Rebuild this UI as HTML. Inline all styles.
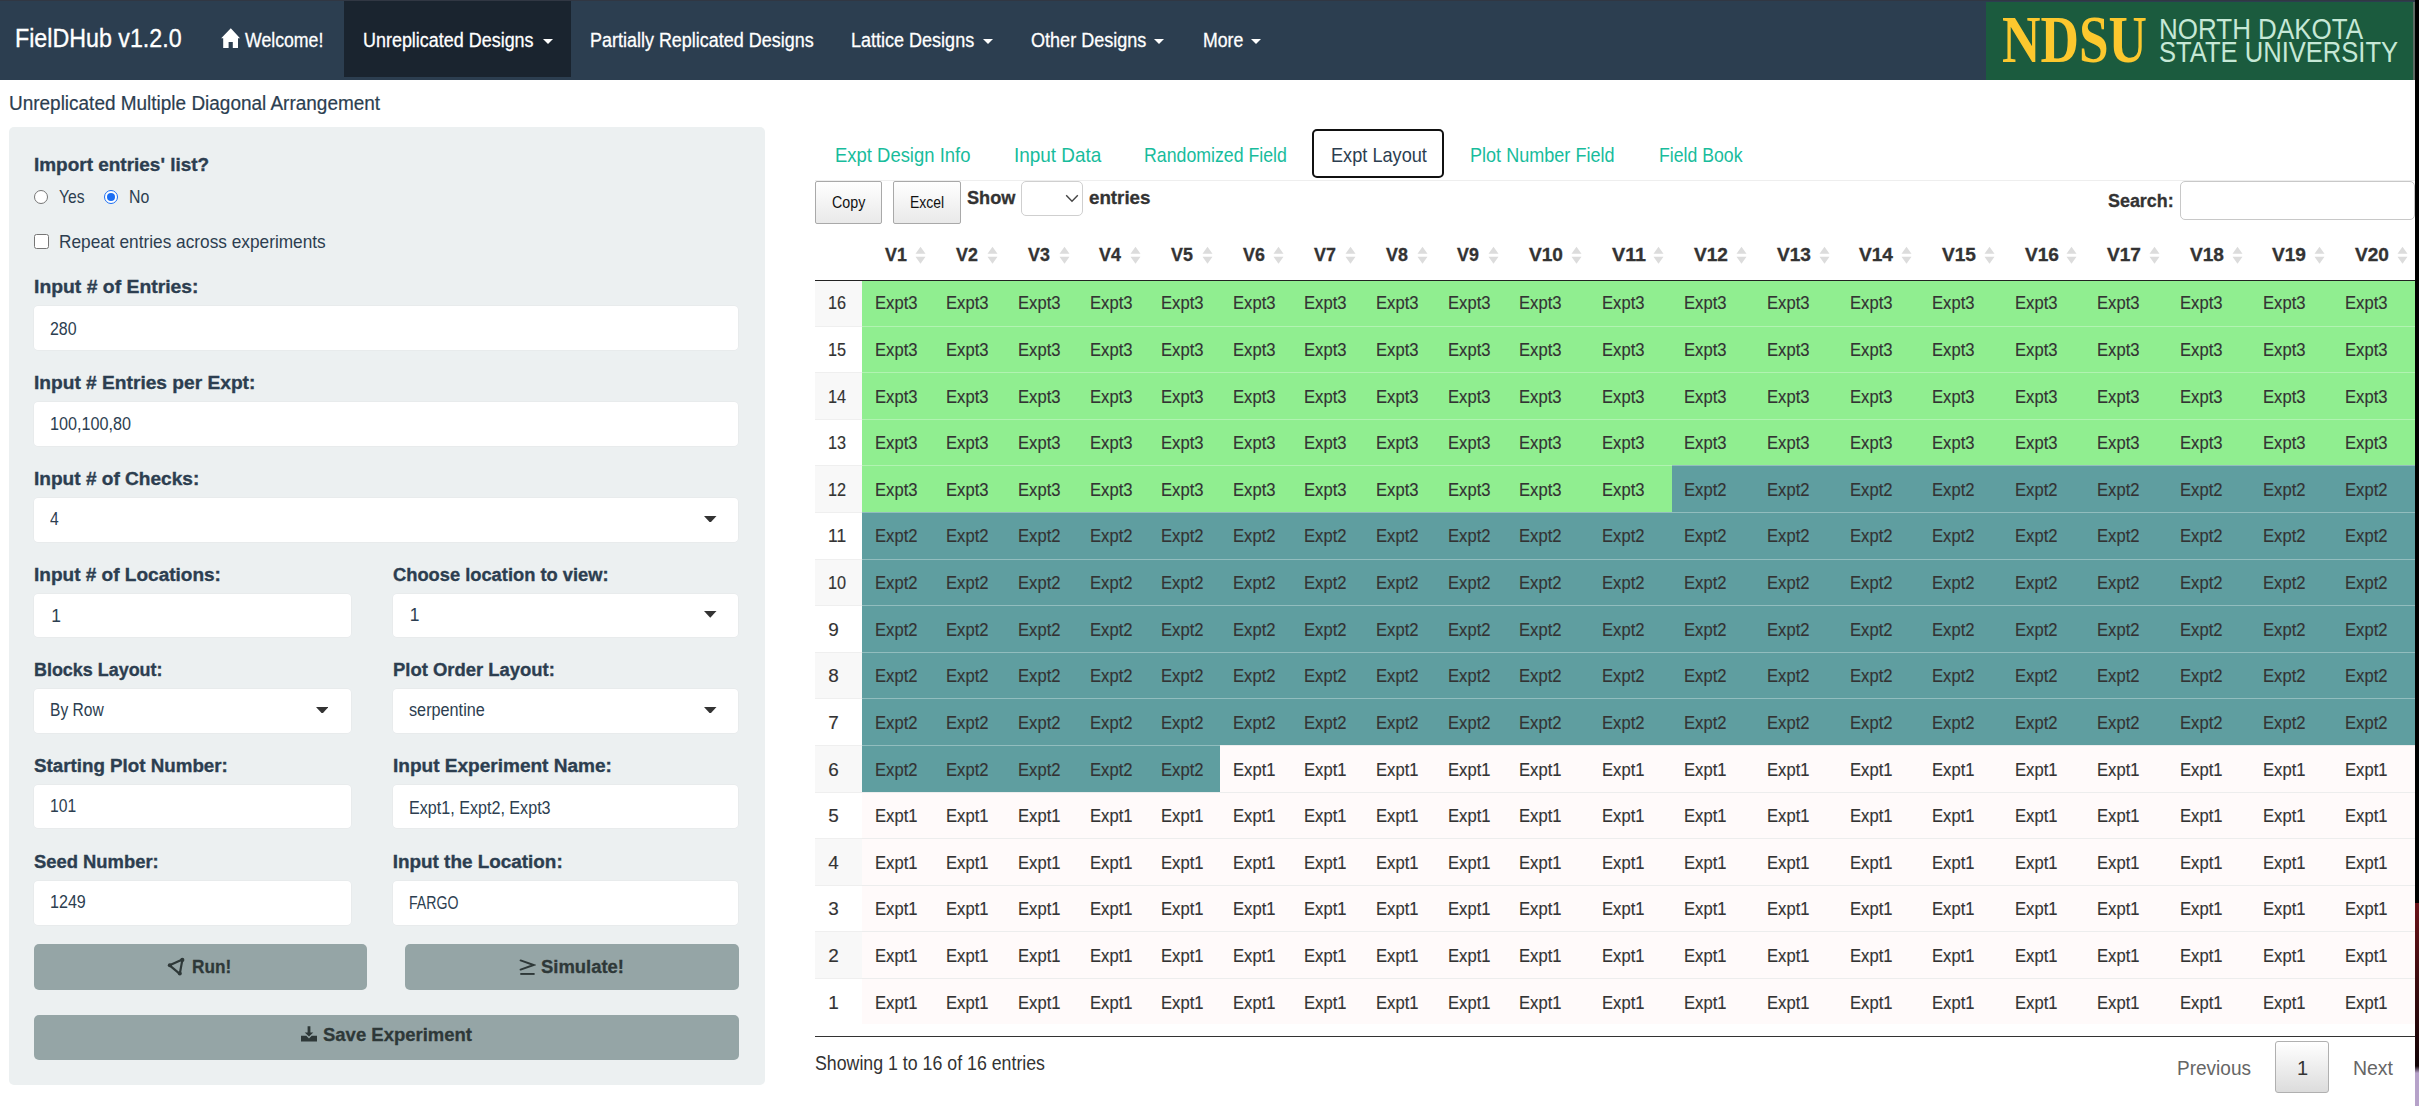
<!DOCTYPE html>
<html><head><meta charset="utf-8"><title>FielDHub</title>
<style>
html,body{margin:0;padding:0;}
body{width:2419px;height:1106px;overflow:hidden;position:relative;background:#fff;font-family:"Liberation Sans",sans-serif;}
.t{position:absolute;white-space:pre;transform-origin:0 0;}
.r{position:absolute;}
</style></head><body>
<div class="r" style="left:0.00px;top:0.00px;width:2415.00px;height:80.00px;background:#2c3e50;"></div>
<div class="r" style="left:0.00px;top:0.00px;width:2415.00px;height:1.00px;background:#313743;"></div>
<div class="r" style="left:344.00px;top:1.00px;width:227.00px;height:76.00px;background:#1a242f;"></div>
<div class="r" style="left:1986.00px;top:2.00px;width:427.00px;height:77.50px;background:#1b5b3e;"></div>
<div class="r" style="left:2413.00px;top:2.00px;width:2.00px;height:77.50px;background:#5d6b64;"></div>
<div class="t" style="left:15.20px;top:25.41px;font-size:26.45px;line-height:26.45px;font-weight:normal;color:#ffffff;font-family:'Liberation Sans', sans-serif;transform:scaleX(0.8789);-webkit-text-stroke:0.35px #ffffff;">FielDHub v1.2.0</div>
<div class="t" style="left:245.00px;top:29.57px;font-size:20.35px;line-height:20.35px;font-weight:normal;color:#ffffff;font-family:'Liberation Sans', sans-serif;transform:scaleX(0.8702);-webkit-text-stroke:0.3px #ffffff;">Welcome!</div>
<div class="t" style="left:363.00px;top:29.61px;font-size:20.79px;line-height:20.79px;font-weight:normal;color:#ffffff;font-family:'Liberation Sans', sans-serif;transform:scaleX(0.8635);-webkit-text-stroke:0.3px #ffffff;">Unreplicated Designs</div>
<div class="t" style="left:590.00px;top:29.61px;font-size:20.79px;line-height:20.79px;font-weight:normal;color:#ffffff;font-family:'Liberation Sans', sans-serif;transform:scaleX(0.8645);-webkit-text-stroke:0.3px #ffffff;">Partially Replicated Designs</div>
<div class="t" style="left:851.30px;top:29.61px;font-size:20.79px;line-height:20.79px;font-weight:normal;color:#ffffff;font-family:'Liberation Sans', sans-serif;transform:scaleX(0.8669);-webkit-text-stroke:0.3px #ffffff;">Lattice Designs</div>
<div class="t" style="left:1030.60px;top:29.61px;font-size:20.79px;line-height:20.79px;font-weight:normal;color:#ffffff;font-family:'Liberation Sans', sans-serif;transform:scaleX(0.8685);-webkit-text-stroke:0.3px #ffffff;">Other Designs</div>
<div class="t" style="left:1202.70px;top:29.61px;font-size:20.79px;line-height:20.79px;font-weight:normal;color:#ffffff;font-family:'Liberation Sans', sans-serif;transform:scaleX(0.8513);-webkit-text-stroke:0.3px #ffffff;">More</div>
<svg class="r" style="left:543.00px;top:38.80px" width="10" height="5" viewBox="0 0 10 5"><path d="M0 0H10L5.0 5Z" fill="#fff"/></svg>
<svg class="r" style="left:983.30px;top:38.80px" width="10" height="5" viewBox="0 0 10 5"><path d="M0 0H10L5.0 5Z" fill="#fff"/></svg>
<svg class="r" style="left:1154.30px;top:38.80px" width="10" height="5" viewBox="0 0 10 5"><path d="M0 0H10L5.0 5Z" fill="#fff"/></svg>
<svg class="r" style="left:1251.00px;top:38.80px" width="10" height="5" viewBox="0 0 10 5"><path d="M0 0H10L5.0 5Z" fill="#fff"/></svg>
<svg class="r" style="left:221px;top:28px" width="20" height="21" viewBox="0 0 20 21"><path d="M9.8 0.3 L19 10.3 H17 V20 H11.8 V14 H7.6 V20 H2.2 V10.3 H0.2 Z" fill="#fff"/></svg>
<div class="t" style="left:2002.00px;top:5.73px;font-size:67.66px;line-height:67.66px;font-weight:bold;color:#fcc82e;font-family:'Liberation Serif', serif;transform:scaleX(0.7872);">NDSU</div>
<div class="t" style="left:2159.30px;top:14.66px;font-size:28.63px;line-height:28.63px;font-weight:normal;color:#c6e8d6;font-family:'Liberation Sans', sans-serif;transform:scaleX(0.9077);">NORTH DAKOTA</div>
<div class="t" style="left:2158.80px;top:37.30px;font-size:29.65px;line-height:29.65px;font-weight:normal;color:#c6e8d6;font-family:'Liberation Sans', sans-serif;transform:scaleX(0.8626);">STATE UNIVERSITY</div>
<div class="t" style="left:9.10px;top:94.34px;font-size:19.33px;line-height:19.33px;font-weight:normal;color:#2c3e50;font-family:'Liberation Sans', sans-serif;transform:scaleX(0.9813);-webkit-text-stroke:0.2px #2c3e50;">Unreplicated Multiple Diagonal Arrangement</div>
<div class="r" style="left:8.50px;top:127.00px;width:756.00px;height:957.50px;background:#ecf0f1;border-radius:5px;"></div>
<div class="t" style="left:33.60px;top:156.30px;font-size:18.90px;line-height:18.90px;font-weight:bold;color:#2c3e50;font-family:'Liberation Sans', sans-serif;transform:scaleX(1.0035);-webkit-text-stroke:0.35px #2c3e50;">Import entries&#x27; list?</div>
<div class="r" style="left:33.7px;top:189.8px;width:14.6px;height:14.6px;border-radius:50%;box-sizing:border-box;border:1px solid #767676;background:#fff;"></div>
<div class="r" style="left:103.9px;top:189.8px;width:14.6px;height:14.6px;border-radius:50%;box-sizing:border-box;border:1.6px solid #1b6ef3;background:#fff;"></div>
<div class="r" style="left:106.9px;top:192.8px;width:8.6px;height:8.6px;border-radius:50%;background:#1b6ef3;"></div>
<div class="t" style="left:59.00px;top:189.07px;font-size:17.88px;line-height:17.88px;font-weight:normal;color:#2c3e50;font-family:'Liberation Sans', sans-serif;transform:scaleX(0.8771);">Yes</div>
<div class="t" style="left:129.00px;top:189.07px;font-size:17.88px;line-height:17.88px;font-weight:normal;color:#2c3e50;font-family:'Liberation Sans', sans-serif;transform:scaleX(0.8888);">No</div>
<div class="r" style="left:33.6px;top:234px;width:15px;height:14.6px;border-radius:2.5px;box-sizing:border-box;border:1px solid #767676;background:#fff;"></div>
<div class="t" style="left:59.00px;top:232.80px;font-size:18.31px;line-height:18.31px;font-weight:normal;color:#2c3e50;font-family:'Liberation Sans', sans-serif;transform:scaleX(0.9435);">Repeat entries across experiments</div>
<div class="t" style="left:33.60px;top:278.20px;font-size:18.90px;line-height:18.90px;font-weight:bold;color:#2c3e50;font-family:'Liberation Sans', sans-serif;transform:scaleX(1.0248);-webkit-text-stroke:0.35px #2c3e50;">Input # of Entries:</div>
<div class="t" style="left:33.60px;top:373.90px;font-size:18.90px;line-height:18.90px;font-weight:bold;color:#2c3e50;font-family:'Liberation Sans', sans-serif;transform:scaleX(1.0138);-webkit-text-stroke:0.35px #2c3e50;">Input # Entries per Expt:</div>
<div class="t" style="left:33.60px;top:469.80px;font-size:18.90px;line-height:18.90px;font-weight:bold;color:#2c3e50;font-family:'Liberation Sans', sans-serif;transform:scaleX(1.0093);-webkit-text-stroke:0.35px #2c3e50;">Input # of Checks:</div>
<div class="t" style="left:33.60px;top:565.70px;font-size:18.90px;line-height:18.90px;font-weight:bold;color:#2c3e50;font-family:'Liberation Sans', sans-serif;transform:scaleX(1.0065);-webkit-text-stroke:0.35px #2c3e50;">Input # of Locations:</div>
<div class="t" style="left:393.00px;top:565.70px;font-size:18.90px;line-height:18.90px;font-weight:bold;color:#2c3e50;font-family:'Liberation Sans', sans-serif;transform:scaleX(0.9686);-webkit-text-stroke:0.35px #2c3e50;">Choose location to view:</div>
<div class="t" style="left:33.70px;top:660.80px;font-size:18.90px;line-height:18.90px;font-weight:bold;color:#2c3e50;font-family:'Liberation Sans', sans-serif;transform:scaleX(0.9488);-webkit-text-stroke:0.35px #2c3e50;">Blocks Layout:</div>
<div class="t" style="left:392.70px;top:660.80px;font-size:18.90px;line-height:18.90px;font-weight:bold;color:#2c3e50;font-family:'Liberation Sans', sans-serif;transform:scaleX(0.9761);-webkit-text-stroke:0.35px #2c3e50;">Plot Order Layout:</div>
<div class="t" style="left:33.70px;top:757.10px;font-size:18.90px;line-height:18.90px;font-weight:bold;color:#2c3e50;font-family:'Liberation Sans', sans-serif;transform:scaleX(0.9929);-webkit-text-stroke:0.35px #2c3e50;">Starting Plot Number:</div>
<div class="t" style="left:392.80px;top:757.20px;font-size:18.90px;line-height:18.90px;font-weight:bold;color:#2c3e50;font-family:'Liberation Sans', sans-serif;transform:scaleX(1.0076);-webkit-text-stroke:0.35px #2c3e50;">Input Experiment Name:</div>
<div class="t" style="left:33.70px;top:853.10px;font-size:18.90px;line-height:18.90px;font-weight:bold;color:#2c3e50;font-family:'Liberation Sans', sans-serif;transform:scaleX(0.9734);-webkit-text-stroke:0.35px #2c3e50;">Seed Number:</div>
<div class="t" style="left:392.70px;top:853.30px;font-size:18.90px;line-height:18.90px;font-weight:bold;color:#2c3e50;font-family:'Liberation Sans', sans-serif;-webkit-text-stroke:0.35px #2c3e50;">Input the Location:</div>
<div class="r" style="left:34.30px;top:305.50px;width:703.90px;height:44.50px;background:#fff;border-radius:4px;box-shadow:0 0 0 0.5px #e3e6e8;"></div>
<div class="r" style="left:34.30px;top:402.00px;width:703.90px;height:44.00px;background:#fff;border-radius:4px;box-shadow:0 0 0 0.5px #e3e6e8;"></div>
<div class="r" style="left:34.30px;top:497.70px;width:703.90px;height:44.30px;background:#fff;border-radius:4px;box-shadow:0 0 0 0.5px #e3e6e8;"></div>
<div class="r" style="left:34.20px;top:593.80px;width:316.60px;height:43.20px;background:#fff;border-radius:4px;box-shadow:0 0 0 0.5px #e3e6e8;"></div>
<div class="r" style="left:393.40px;top:593.80px;width:344.90px;height:43.20px;background:#fff;border-radius:4px;box-shadow:0 0 0 0.5px #e3e6e8;"></div>
<div class="r" style="left:34.20px;top:688.90px;width:316.60px;height:44.10px;background:#fff;border-radius:4px;box-shadow:0 0 0 0.5px #e3e6e8;"></div>
<div class="r" style="left:393.40px;top:688.90px;width:344.90px;height:44.10px;background:#fff;border-radius:4px;box-shadow:0 0 0 0.5px #e3e6e8;"></div>
<div class="r" style="left:34.20px;top:784.80px;width:316.60px;height:43.70px;background:#fff;border-radius:4px;box-shadow:0 0 0 0.5px #e3e6e8;"></div>
<div class="r" style="left:393.40px;top:784.80px;width:344.90px;height:43.70px;background:#fff;border-radius:4px;box-shadow:0 0 0 0.5px #e3e6e8;"></div>
<div class="r" style="left:34.20px;top:881.00px;width:316.60px;height:43.50px;background:#fff;border-radius:4px;box-shadow:0 0 0 0.5px #e3e6e8;"></div>
<div class="r" style="left:393.40px;top:881.00px;width:344.90px;height:43.50px;background:#fff;border-radius:4px;box-shadow:0 0 0 0.5px #e3e6e8;"></div>
<div class="t" style="left:50.00px;top:320.94px;font-size:17.44px;line-height:17.44px;font-weight:normal;color:#2c3e50;font-family:'Liberation Sans', sans-serif;transform:scaleX(0.9146);">280</div>
<div class="t" style="left:50.00px;top:416.04px;font-size:17.44px;line-height:17.44px;font-weight:normal;color:#2c3e50;font-family:'Liberation Sans', sans-serif;transform:scaleX(0.9279);">100,100,80</div>
<div class="t" style="left:50.00px;top:510.84px;font-size:17.44px;line-height:17.44px;font-weight:normal;color:#2c3e50;font-family:'Liberation Sans', sans-serif;transform:scaleX(0.8987);">4</div>
<div class="t" style="left:51.20px;top:607.84px;font-size:17.44px;line-height:17.44px;font-weight:normal;color:#2c3e50;font-family:'Liberation Sans', sans-serif;">1</div>
<div class="t" style="left:409.80px;top:607.44px;font-size:17.44px;line-height:17.44px;font-weight:normal;color:#2c3e50;font-family:'Liberation Sans', sans-serif;">1</div>
<div class="t" style="left:50.00px;top:701.94px;font-size:17.44px;line-height:17.44px;font-weight:normal;color:#2c3e50;font-family:'Liberation Sans', sans-serif;transform:scaleX(0.8947);">By Row</div>
<div class="t" style="left:408.80px;top:701.94px;font-size:17.44px;line-height:17.44px;font-weight:normal;color:#2c3e50;font-family:'Liberation Sans', sans-serif;transform:scaleX(0.9306);">serpentine</div>
<div class="t" style="left:49.70px;top:798.24px;font-size:17.44px;line-height:17.44px;font-weight:normal;color:#2c3e50;font-family:'Liberation Sans', sans-serif;transform:scaleX(0.9008);">101</div>
<div class="t" style="left:409.00px;top:800.14px;font-size:17.44px;line-height:17.44px;font-weight:normal;color:#2c3e50;font-family:'Liberation Sans', sans-serif;transform:scaleX(0.9244);">Expt1, Expt2, Expt3</div>
<div class="t" style="left:49.70px;top:894.34px;font-size:17.44px;line-height:17.44px;font-weight:normal;color:#2c3e50;font-family:'Liberation Sans', sans-serif;transform:scaleX(0.9225);">1249</div>
<div class="t" style="left:409.00px;top:895.14px;font-size:17.44px;line-height:17.44px;font-weight:normal;color:#2c3e50;font-family:'Liberation Sans', sans-serif;transform:scaleX(0.8108);">FARGO</div>
<svg class="r" style="left:704.05px;top:515.50px" width="12.5" height="6.8" viewBox="0 0 12.5 6.8"><path d="M0 0H12.5L6.25 6.8Z" fill="#333"/></svg>
<svg class="r" style="left:704.05px;top:611.30px" width="12.5" height="6.8" viewBox="0 0 12.5 6.8"><path d="M0 0H12.5L6.25 6.8Z" fill="#333"/></svg>
<svg class="r" style="left:315.75px;top:706.70px" width="12.5" height="6.8" viewBox="0 0 12.5 6.8"><path d="M0 0H12.5L6.25 6.8Z" fill="#333"/></svg>
<svg class="r" style="left:704.25px;top:706.70px" width="12.5" height="6.8" viewBox="0 0 12.5 6.8"><path d="M0 0H12.5L6.25 6.8Z" fill="#333"/></svg>
<div class="r" style="left:33.70px;top:944.30px;width:333.80px;height:45.50px;background:#95a5a6;border-radius:5px;"></div>
<div class="r" style="left:405.20px;top:944.40px;width:333.60px;height:45.20px;background:#95a5a6;border-radius:5px;"></div>
<div class="r" style="left:33.70px;top:1015.00px;width:705.30px;height:44.60px;background:#95a5a6;border-radius:5px;"></div>
<svg class="r" style="left:167px;top:957px" width="20" height="20" viewBox="0 0 20 20"><path d="M2.6 8.3 L15.4 2.6 L12.8 16.8 Z" fill="none" stroke="#2e3838" stroke-width="2.2" stroke-linejoin="round"/><circle cx="2.8" cy="8.3" r="2" fill="#2e3838"/><circle cx="15.3" cy="2.9" r="2.1" fill="#2e3838"/><circle cx="12.8" cy="16.6" r="2" fill="#2e3838"/></svg>
<div class="t" style="left:192.20px;top:958.30px;font-size:18.90px;line-height:18.90px;font-weight:bold;color:#2e3838;font-family:'Liberation Sans', sans-serif;transform:scaleX(0.9109);-webkit-text-stroke:0.3px #2e3838;">Run!</div>
<svg class="r" style="left:518px;top:958px" width="18" height="18" viewBox="0 0 18 18"><path d="M2.6 2.4 L15.6 7 L2.6 11.6" fill="none" stroke="#2e3838" stroke-width="1.9" stroke-linecap="round" stroke-linejoin="miter"/><rect x="2.3" y="15" width="14.3" height="1.9" fill="#2e3838"/></svg>
<div class="t" style="left:540.90px;top:958.40px;font-size:18.90px;line-height:18.90px;font-weight:bold;color:#2e3838;font-family:'Liberation Sans', sans-serif;transform:scaleX(0.9761);-webkit-text-stroke:0.3px #2e3838;">Simulate!</div>
<svg class="r" style="left:300px;top:1025px" width="18" height="18" viewBox="0 0 18 18"><path d="M7.6 1.3 H10.4 V7.5 H13.3 L9 11.6 L4.7 7.5 H7.6 Z" fill="#2e3838"/><path d="M1 10.8 H6.3 L9 13.4 L11.7 10.8 H17 V16.6 H1 Z" fill="#2e3838"/></svg>
<div class="t" style="left:323.00px;top:1026.15px;font-size:18.60px;line-height:18.60px;font-weight:bold;color:#2e3838;font-family:'Liberation Sans', sans-serif;transform:scaleX(0.9943);-webkit-text-stroke:0.3px #2e3838;">Save Experiment</div>
<div class="r" style="left:815.00px;top:180.00px;width:1600.00px;height:1.00px;background:#eeeeee;"></div>
<div class="r" style="left:1312.40px;top:128.70px;width:132.10px;height:49.30px;box-sizing:border-box;border:2.2px solid #111;border-radius:5px;background:#fff;"></div>
<div class="t" style="left:835.00px;top:144.62px;font-size:20.06px;line-height:20.06px;font-weight:normal;color:#18bc9c;font-family:'Liberation Sans', sans-serif;transform:scaleX(0.9206);">Expt Design Info</div>
<div class="t" style="left:1013.60px;top:144.62px;font-size:20.06px;line-height:20.06px;font-weight:normal;color:#18bc9c;font-family:'Liberation Sans', sans-serif;transform:scaleX(0.9442);">Input Data</div>
<div class="t" style="left:1144.00px;top:144.62px;font-size:20.06px;line-height:20.06px;font-weight:normal;color:#18bc9c;font-family:'Liberation Sans', sans-serif;transform:scaleX(0.8845);">Randomized Field</div>
<div class="t" style="left:1330.70px;top:144.62px;font-size:20.06px;line-height:20.06px;font-weight:normal;color:#2c3e50;font-family:'Liberation Sans', sans-serif;transform:scaleX(0.9060);">Expt Layout</div>
<div class="t" style="left:1469.80px;top:144.62px;font-size:20.06px;line-height:20.06px;font-weight:normal;color:#18bc9c;font-family:'Liberation Sans', sans-serif;transform:scaleX(0.9008);">Plot Number Field</div>
<div class="t" style="left:1658.50px;top:144.62px;font-size:20.06px;line-height:20.06px;font-weight:normal;color:#18bc9c;font-family:'Liberation Sans', sans-serif;transform:scaleX(0.8816);">Field Book</div>
<div class="r" style="left:815.00px;top:180.50px;width:67.30px;height:43.00px;box-sizing:border-box;border:1px solid #a9a9a9;border-radius:2px;background:linear-gradient(to bottom,#ffffff 0%,#e9e9e9 100%);"></div>
<div class="r" style="left:893.20px;top:180.50px;width:68.30px;height:43.00px;box-sizing:border-box;border:1px solid #a9a9a9;border-radius:2px;background:linear-gradient(to bottom,#ffffff 0%,#e9e9e9 100%);"></div>
<div class="t" style="left:831.70px;top:194.40px;font-size:16.42px;line-height:16.42px;font-weight:normal;color:#111;font-family:'Liberation Sans', sans-serif;transform:scaleX(0.8683);">Copy</div>
<div class="t" style="left:910.10px;top:194.40px;font-size:16.42px;line-height:16.42px;font-weight:normal;color:#111;font-family:'Liberation Sans', sans-serif;transform:scaleX(0.8516);">Excel</div>
<div class="t" style="left:967.00px;top:190.27px;font-size:17.88px;line-height:17.88px;font-weight:bold;color:#333;font-family:'Liberation Sans', sans-serif;transform:scaleX(1.0170);-webkit-text-stroke:0.3px #333;">Show</div>
<div class="r" style="left:1021.30px;top:180.50px;width:62.20px;height:35.00px;box-sizing:border-box;border:1px solid #cfcfcf;border-radius:5px;background:#fff;"></div>
<svg class="r" style="left:1065px;top:194px" width="14" height="9" viewBox="0 0 14 9"><path d="M1.2 1.3 L7 7.3 L12.8 1.3" fill="none" stroke="#444" stroke-width="1.4"/></svg>
<div class="t" style="left:1088.50px;top:190.27px;font-size:17.88px;line-height:17.88px;font-weight:bold;color:#333;font-family:'Liberation Sans', sans-serif;transform:scaleX(1.0488);-webkit-text-stroke:0.3px #333;">entries</div>
<div class="t" style="left:2108.40px;top:192.03px;font-size:18.75px;line-height:18.75px;font-weight:bold;color:#333;font-family:'Liberation Sans', sans-serif;transform:scaleX(0.9539);-webkit-text-stroke:0.3px #333;">Search:</div>
<div class="r" style="left:2179.60px;top:180.50px;width:235.00px;height:39.90px;box-sizing:border-box;border:1px solid #c8c8c8;border-radius:5px;background:#fff;"></div>
<div class="t" style="left:884.50px;top:245.80px;font-size:18.31px;line-height:18.31px;font-weight:bold;color:#333;font-family:'Liberation Sans', sans-serif;transform:scaleX(0.9737);-webkit-text-stroke:0.3px #333;">V1</div>
<svg class="r" style="left:915.30px;top:245.5px" width="11" height="18.5" viewBox="0 0 11 18"><path d="M5.5 0.5 L10.5 7.6 H0.5 Z M5.5 17.5 L10.5 10.4 H0.5 Z" fill="#dcdcdc"/></svg>
<div class="t" style="left:956.10px;top:245.80px;font-size:18.31px;line-height:18.31px;font-weight:bold;color:#333;font-family:'Liberation Sans', sans-serif;transform:scaleX(0.9737);-webkit-text-stroke:0.3px #333;">V2</div>
<svg class="r" style="left:986.90px;top:245.5px" width="11" height="18.5" viewBox="0 0 11 18"><path d="M5.5 0.5 L10.5 7.6 H0.5 Z M5.5 17.5 L10.5 10.4 H0.5 Z" fill="#dcdcdc"/></svg>
<div class="t" style="left:1027.70px;top:245.80px;font-size:18.31px;line-height:18.31px;font-weight:bold;color:#333;font-family:'Liberation Sans', sans-serif;transform:scaleX(0.9737);-webkit-text-stroke:0.3px #333;">V3</div>
<svg class="r" style="left:1058.50px;top:245.5px" width="11" height="18.5" viewBox="0 0 11 18"><path d="M5.5 0.5 L10.5 7.6 H0.5 Z M5.5 17.5 L10.5 10.4 H0.5 Z" fill="#dcdcdc"/></svg>
<div class="t" style="left:1099.30px;top:245.80px;font-size:18.31px;line-height:18.31px;font-weight:bold;color:#333;font-family:'Liberation Sans', sans-serif;transform:scaleX(0.9737);-webkit-text-stroke:0.3px #333;">V4</div>
<svg class="r" style="left:1130.10px;top:245.5px" width="11" height="18.5" viewBox="0 0 11 18"><path d="M5.5 0.5 L10.5 7.6 H0.5 Z M5.5 17.5 L10.5 10.4 H0.5 Z" fill="#dcdcdc"/></svg>
<div class="t" style="left:1170.90px;top:245.80px;font-size:18.31px;line-height:18.31px;font-weight:bold;color:#333;font-family:'Liberation Sans', sans-serif;transform:scaleX(0.9737);-webkit-text-stroke:0.3px #333;">V5</div>
<svg class="r" style="left:1201.70px;top:245.5px" width="11" height="18.5" viewBox="0 0 11 18"><path d="M5.5 0.5 L10.5 7.6 H0.5 Z M5.5 17.5 L10.5 10.4 H0.5 Z" fill="#dcdcdc"/></svg>
<div class="t" style="left:1242.50px;top:245.80px;font-size:18.31px;line-height:18.31px;font-weight:bold;color:#333;font-family:'Liberation Sans', sans-serif;transform:scaleX(0.9737);-webkit-text-stroke:0.3px #333;">V6</div>
<svg class="r" style="left:1273.30px;top:245.5px" width="11" height="18.5" viewBox="0 0 11 18"><path d="M5.5 0.5 L10.5 7.6 H0.5 Z M5.5 17.5 L10.5 10.4 H0.5 Z" fill="#dcdcdc"/></svg>
<div class="t" style="left:1314.10px;top:245.80px;font-size:18.31px;line-height:18.31px;font-weight:bold;color:#333;font-family:'Liberation Sans', sans-serif;transform:scaleX(0.9737);-webkit-text-stroke:0.3px #333;">V7</div>
<svg class="r" style="left:1344.90px;top:245.5px" width="11" height="18.5" viewBox="0 0 11 18"><path d="M5.5 0.5 L10.5 7.6 H0.5 Z M5.5 17.5 L10.5 10.4 H0.5 Z" fill="#dcdcdc"/></svg>
<div class="t" style="left:1385.70px;top:245.80px;font-size:18.31px;line-height:18.31px;font-weight:bold;color:#333;font-family:'Liberation Sans', sans-serif;transform:scaleX(0.9737);-webkit-text-stroke:0.3px #333;">V8</div>
<svg class="r" style="left:1416.50px;top:245.5px" width="11" height="18.5" viewBox="0 0 11 18"><path d="M5.5 0.5 L10.5 7.6 H0.5 Z M5.5 17.5 L10.5 10.4 H0.5 Z" fill="#dcdcdc"/></svg>
<div class="t" style="left:1457.30px;top:245.80px;font-size:18.31px;line-height:18.31px;font-weight:bold;color:#333;font-family:'Liberation Sans', sans-serif;transform:scaleX(0.9737);-webkit-text-stroke:0.3px #333;">V9</div>
<svg class="r" style="left:1488.10px;top:245.5px" width="11" height="18.5" viewBox="0 0 11 18"><path d="M5.5 0.5 L10.5 7.6 H0.5 Z M5.5 17.5 L10.5 10.4 H0.5 Z" fill="#dcdcdc"/></svg>
<div class="t" style="left:1528.90px;top:245.80px;font-size:18.31px;line-height:18.31px;font-weight:bold;color:#333;font-family:'Liberation Sans', sans-serif;transform:scaleX(1.0430);-webkit-text-stroke:0.3px #333;">V10</div>
<svg class="r" style="left:1570.70px;top:245.5px" width="11" height="18.5" viewBox="0 0 11 18"><path d="M5.5 0.5 L10.5 7.6 H0.5 Z M5.5 17.5 L10.5 10.4 H0.5 Z" fill="#dcdcdc"/></svg>
<div class="t" style="left:1611.50px;top:245.80px;font-size:18.31px;line-height:18.31px;font-weight:bold;color:#333;font-family:'Liberation Sans', sans-serif;transform:scaleX(1.0762);-webkit-text-stroke:0.3px #333;">V11</div>
<svg class="r" style="left:1653.30px;top:245.5px" width="11" height="18.5" viewBox="0 0 11 18"><path d="M5.5 0.5 L10.5 7.6 H0.5 Z M5.5 17.5 L10.5 10.4 H0.5 Z" fill="#dcdcdc"/></svg>
<div class="t" style="left:1694.10px;top:245.80px;font-size:18.31px;line-height:18.31px;font-weight:bold;color:#333;font-family:'Liberation Sans', sans-serif;transform:scaleX(1.0430);-webkit-text-stroke:0.3px #333;">V12</div>
<svg class="r" style="left:1735.90px;top:245.5px" width="11" height="18.5" viewBox="0 0 11 18"><path d="M5.5 0.5 L10.5 7.6 H0.5 Z M5.5 17.5 L10.5 10.4 H0.5 Z" fill="#dcdcdc"/></svg>
<div class="t" style="left:1776.70px;top:245.80px;font-size:18.31px;line-height:18.31px;font-weight:bold;color:#333;font-family:'Liberation Sans', sans-serif;transform:scaleX(1.0430);-webkit-text-stroke:0.3px #333;">V13</div>
<svg class="r" style="left:1818.50px;top:245.5px" width="11" height="18.5" viewBox="0 0 11 18"><path d="M5.5 0.5 L10.5 7.6 H0.5 Z M5.5 17.5 L10.5 10.4 H0.5 Z" fill="#dcdcdc"/></svg>
<div class="t" style="left:1859.30px;top:245.80px;font-size:18.31px;line-height:18.31px;font-weight:bold;color:#333;font-family:'Liberation Sans', sans-serif;transform:scaleX(1.0430);-webkit-text-stroke:0.3px #333;">V14</div>
<svg class="r" style="left:1901.10px;top:245.5px" width="11" height="18.5" viewBox="0 0 11 18"><path d="M5.5 0.5 L10.5 7.6 H0.5 Z M5.5 17.5 L10.5 10.4 H0.5 Z" fill="#dcdcdc"/></svg>
<div class="t" style="left:1941.90px;top:245.80px;font-size:18.31px;line-height:18.31px;font-weight:bold;color:#333;font-family:'Liberation Sans', sans-serif;transform:scaleX(1.0430);-webkit-text-stroke:0.3px #333;">V15</div>
<svg class="r" style="left:1983.70px;top:245.5px" width="11" height="18.5" viewBox="0 0 11 18"><path d="M5.5 0.5 L10.5 7.6 H0.5 Z M5.5 17.5 L10.5 10.4 H0.5 Z" fill="#dcdcdc"/></svg>
<div class="t" style="left:2024.50px;top:245.80px;font-size:18.31px;line-height:18.31px;font-weight:bold;color:#333;font-family:'Liberation Sans', sans-serif;transform:scaleX(1.0430);-webkit-text-stroke:0.3px #333;">V16</div>
<svg class="r" style="left:2066.30px;top:245.5px" width="11" height="18.5" viewBox="0 0 11 18"><path d="M5.5 0.5 L10.5 7.6 H0.5 Z M5.5 17.5 L10.5 10.4 H0.5 Z" fill="#dcdcdc"/></svg>
<div class="t" style="left:2107.10px;top:245.80px;font-size:18.31px;line-height:18.31px;font-weight:bold;color:#333;font-family:'Liberation Sans', sans-serif;transform:scaleX(1.0430);-webkit-text-stroke:0.3px #333;">V17</div>
<svg class="r" style="left:2148.90px;top:245.5px" width="11" height="18.5" viewBox="0 0 11 18"><path d="M5.5 0.5 L10.5 7.6 H0.5 Z M5.5 17.5 L10.5 10.4 H0.5 Z" fill="#dcdcdc"/></svg>
<div class="t" style="left:2189.70px;top:245.80px;font-size:18.31px;line-height:18.31px;font-weight:bold;color:#333;font-family:'Liberation Sans', sans-serif;transform:scaleX(1.0430);-webkit-text-stroke:0.3px #333;">V18</div>
<svg class="r" style="left:2231.50px;top:245.5px" width="11" height="18.5" viewBox="0 0 11 18"><path d="M5.5 0.5 L10.5 7.6 H0.5 Z M5.5 17.5 L10.5 10.4 H0.5 Z" fill="#dcdcdc"/></svg>
<div class="t" style="left:2272.30px;top:245.80px;font-size:18.31px;line-height:18.31px;font-weight:bold;color:#333;font-family:'Liberation Sans', sans-serif;transform:scaleX(1.0430);-webkit-text-stroke:0.3px #333;">V19</div>
<svg class="r" style="left:2314.10px;top:245.5px" width="11" height="18.5" viewBox="0 0 11 18"><path d="M5.5 0.5 L10.5 7.6 H0.5 Z M5.5 17.5 L10.5 10.4 H0.5 Z" fill="#dcdcdc"/></svg>
<div class="t" style="left:2354.90px;top:245.80px;font-size:18.31px;line-height:18.31px;font-weight:bold;color:#333;font-family:'Liberation Sans', sans-serif;transform:scaleX(1.0430);-webkit-text-stroke:0.3px #333;">V20</div>
<svg class="r" style="left:2396.70px;top:245.5px" width="11" height="18.5" viewBox="0 0 11 18"><path d="M5.5 0.5 L10.5 7.6 H0.5 Z M5.5 17.5 L10.5 10.4 H0.5 Z" fill="#dcdcdc"/></svg>
<div class="r" style="left:815.00px;top:280.00px;width:47.00px;height:46.00px;background:#f8f8f8;"></div>
<div class="r" style="left:862.00px;top:280.00px;width:1553.00px;height:46.00px;background:#90ee90;"></div>
<div class="t" style="left:828.20px;top:294.30px;font-size:18.90px;line-height:18.90px;font-weight:normal;color:#333;font-family:'Liberation Sans', sans-serif;transform:scaleX(0.8610);-webkit-text-stroke:0.15px #333;">16</div>
<div class="t" style="left:874.70px;top:294.30px;font-size:18.90px;line-height:18.90px;font-weight:normal;color:#333;font-family:'Liberation Sans', sans-serif;transform:scaleX(0.8794);-webkit-text-stroke:0.15px #333;">Expt3</div>
<div class="t" style="left:946.30px;top:294.30px;font-size:18.90px;line-height:18.90px;font-weight:normal;color:#333;font-family:'Liberation Sans', sans-serif;transform:scaleX(0.8794);-webkit-text-stroke:0.15px #333;">Expt3</div>
<div class="t" style="left:1017.90px;top:294.30px;font-size:18.90px;line-height:18.90px;font-weight:normal;color:#333;font-family:'Liberation Sans', sans-serif;transform:scaleX(0.8794);-webkit-text-stroke:0.15px #333;">Expt3</div>
<div class="t" style="left:1089.50px;top:294.30px;font-size:18.90px;line-height:18.90px;font-weight:normal;color:#333;font-family:'Liberation Sans', sans-serif;transform:scaleX(0.8794);-webkit-text-stroke:0.15px #333;">Expt3</div>
<div class="t" style="left:1161.10px;top:294.30px;font-size:18.90px;line-height:18.90px;font-weight:normal;color:#333;font-family:'Liberation Sans', sans-serif;transform:scaleX(0.8794);-webkit-text-stroke:0.15px #333;">Expt3</div>
<div class="t" style="left:1232.70px;top:294.30px;font-size:18.90px;line-height:18.90px;font-weight:normal;color:#333;font-family:'Liberation Sans', sans-serif;transform:scaleX(0.8794);-webkit-text-stroke:0.15px #333;">Expt3</div>
<div class="t" style="left:1304.30px;top:294.30px;font-size:18.90px;line-height:18.90px;font-weight:normal;color:#333;font-family:'Liberation Sans', sans-serif;transform:scaleX(0.8794);-webkit-text-stroke:0.15px #333;">Expt3</div>
<div class="t" style="left:1375.90px;top:294.30px;font-size:18.90px;line-height:18.90px;font-weight:normal;color:#333;font-family:'Liberation Sans', sans-serif;transform:scaleX(0.8794);-webkit-text-stroke:0.15px #333;">Expt3</div>
<div class="t" style="left:1447.50px;top:294.30px;font-size:18.90px;line-height:18.90px;font-weight:normal;color:#333;font-family:'Liberation Sans', sans-serif;transform:scaleX(0.8794);-webkit-text-stroke:0.15px #333;">Expt3</div>
<div class="t" style="left:1519.10px;top:294.30px;font-size:18.90px;line-height:18.90px;font-weight:normal;color:#333;font-family:'Liberation Sans', sans-serif;transform:scaleX(0.8794);-webkit-text-stroke:0.15px #333;">Expt3</div>
<div class="t" style="left:1601.70px;top:294.30px;font-size:18.90px;line-height:18.90px;font-weight:normal;color:#333;font-family:'Liberation Sans', sans-serif;transform:scaleX(0.8794);-webkit-text-stroke:0.15px #333;">Expt3</div>
<div class="t" style="left:1684.30px;top:294.30px;font-size:18.90px;line-height:18.90px;font-weight:normal;color:#333;font-family:'Liberation Sans', sans-serif;transform:scaleX(0.8794);-webkit-text-stroke:0.15px #333;">Expt3</div>
<div class="t" style="left:1766.90px;top:294.30px;font-size:18.90px;line-height:18.90px;font-weight:normal;color:#333;font-family:'Liberation Sans', sans-serif;transform:scaleX(0.8794);-webkit-text-stroke:0.15px #333;">Expt3</div>
<div class="t" style="left:1849.50px;top:294.30px;font-size:18.90px;line-height:18.90px;font-weight:normal;color:#333;font-family:'Liberation Sans', sans-serif;transform:scaleX(0.8794);-webkit-text-stroke:0.15px #333;">Expt3</div>
<div class="t" style="left:1932.10px;top:294.30px;font-size:18.90px;line-height:18.90px;font-weight:normal;color:#333;font-family:'Liberation Sans', sans-serif;transform:scaleX(0.8794);-webkit-text-stroke:0.15px #333;">Expt3</div>
<div class="t" style="left:2014.70px;top:294.30px;font-size:18.90px;line-height:18.90px;font-weight:normal;color:#333;font-family:'Liberation Sans', sans-serif;transform:scaleX(0.8794);-webkit-text-stroke:0.15px #333;">Expt3</div>
<div class="t" style="left:2097.30px;top:294.30px;font-size:18.90px;line-height:18.90px;font-weight:normal;color:#333;font-family:'Liberation Sans', sans-serif;transform:scaleX(0.8794);-webkit-text-stroke:0.15px #333;">Expt3</div>
<div class="t" style="left:2179.90px;top:294.30px;font-size:18.90px;line-height:18.90px;font-weight:normal;color:#333;font-family:'Liberation Sans', sans-serif;transform:scaleX(0.8794);-webkit-text-stroke:0.15px #333;">Expt3</div>
<div class="t" style="left:2262.50px;top:294.30px;font-size:18.90px;line-height:18.90px;font-weight:normal;color:#333;font-family:'Liberation Sans', sans-serif;transform:scaleX(0.8794);-webkit-text-stroke:0.15px #333;">Expt3</div>
<div class="t" style="left:2345.10px;top:294.30px;font-size:18.90px;line-height:18.90px;font-weight:normal;color:#333;font-family:'Liberation Sans', sans-serif;transform:scaleX(0.8794);-webkit-text-stroke:0.15px #333;">Expt3</div>
<div class="r" style="left:815.00px;top:326.00px;width:47.00px;height:46.00px;background:#ffffff;"></div>
<div class="r" style="left:862.00px;top:326.00px;width:1553.00px;height:46.00px;background:#90ee90;"></div>
<div class="r" style="left:862.00px;top:326.00px;width:1553.00px;height:1.00px;background:rgba(255,255,255,0.3);"></div>
<div class="r" style="left:815.00px;top:326.00px;width:47.00px;height:1.00px;background:#efefef;"></div>
<div class="t" style="left:828.20px;top:340.93px;font-size:18.90px;line-height:18.90px;font-weight:normal;color:#333;font-family:'Liberation Sans', sans-serif;transform:scaleX(0.8610);-webkit-text-stroke:0.15px #333;">15</div>
<div class="t" style="left:874.70px;top:340.93px;font-size:18.90px;line-height:18.90px;font-weight:normal;color:#333;font-family:'Liberation Sans', sans-serif;transform:scaleX(0.8794);-webkit-text-stroke:0.15px #333;">Expt3</div>
<div class="t" style="left:946.30px;top:340.93px;font-size:18.90px;line-height:18.90px;font-weight:normal;color:#333;font-family:'Liberation Sans', sans-serif;transform:scaleX(0.8794);-webkit-text-stroke:0.15px #333;">Expt3</div>
<div class="t" style="left:1017.90px;top:340.93px;font-size:18.90px;line-height:18.90px;font-weight:normal;color:#333;font-family:'Liberation Sans', sans-serif;transform:scaleX(0.8794);-webkit-text-stroke:0.15px #333;">Expt3</div>
<div class="t" style="left:1089.50px;top:340.93px;font-size:18.90px;line-height:18.90px;font-weight:normal;color:#333;font-family:'Liberation Sans', sans-serif;transform:scaleX(0.8794);-webkit-text-stroke:0.15px #333;">Expt3</div>
<div class="t" style="left:1161.10px;top:340.93px;font-size:18.90px;line-height:18.90px;font-weight:normal;color:#333;font-family:'Liberation Sans', sans-serif;transform:scaleX(0.8794);-webkit-text-stroke:0.15px #333;">Expt3</div>
<div class="t" style="left:1232.70px;top:340.93px;font-size:18.90px;line-height:18.90px;font-weight:normal;color:#333;font-family:'Liberation Sans', sans-serif;transform:scaleX(0.8794);-webkit-text-stroke:0.15px #333;">Expt3</div>
<div class="t" style="left:1304.30px;top:340.93px;font-size:18.90px;line-height:18.90px;font-weight:normal;color:#333;font-family:'Liberation Sans', sans-serif;transform:scaleX(0.8794);-webkit-text-stroke:0.15px #333;">Expt3</div>
<div class="t" style="left:1375.90px;top:340.93px;font-size:18.90px;line-height:18.90px;font-weight:normal;color:#333;font-family:'Liberation Sans', sans-serif;transform:scaleX(0.8794);-webkit-text-stroke:0.15px #333;">Expt3</div>
<div class="t" style="left:1447.50px;top:340.93px;font-size:18.90px;line-height:18.90px;font-weight:normal;color:#333;font-family:'Liberation Sans', sans-serif;transform:scaleX(0.8794);-webkit-text-stroke:0.15px #333;">Expt3</div>
<div class="t" style="left:1519.10px;top:340.93px;font-size:18.90px;line-height:18.90px;font-weight:normal;color:#333;font-family:'Liberation Sans', sans-serif;transform:scaleX(0.8794);-webkit-text-stroke:0.15px #333;">Expt3</div>
<div class="t" style="left:1601.70px;top:340.93px;font-size:18.90px;line-height:18.90px;font-weight:normal;color:#333;font-family:'Liberation Sans', sans-serif;transform:scaleX(0.8794);-webkit-text-stroke:0.15px #333;">Expt3</div>
<div class="t" style="left:1684.30px;top:340.93px;font-size:18.90px;line-height:18.90px;font-weight:normal;color:#333;font-family:'Liberation Sans', sans-serif;transform:scaleX(0.8794);-webkit-text-stroke:0.15px #333;">Expt3</div>
<div class="t" style="left:1766.90px;top:340.93px;font-size:18.90px;line-height:18.90px;font-weight:normal;color:#333;font-family:'Liberation Sans', sans-serif;transform:scaleX(0.8794);-webkit-text-stroke:0.15px #333;">Expt3</div>
<div class="t" style="left:1849.50px;top:340.93px;font-size:18.90px;line-height:18.90px;font-weight:normal;color:#333;font-family:'Liberation Sans', sans-serif;transform:scaleX(0.8794);-webkit-text-stroke:0.15px #333;">Expt3</div>
<div class="t" style="left:1932.10px;top:340.93px;font-size:18.90px;line-height:18.90px;font-weight:normal;color:#333;font-family:'Liberation Sans', sans-serif;transform:scaleX(0.8794);-webkit-text-stroke:0.15px #333;">Expt3</div>
<div class="t" style="left:2014.70px;top:340.93px;font-size:18.90px;line-height:18.90px;font-weight:normal;color:#333;font-family:'Liberation Sans', sans-serif;transform:scaleX(0.8794);-webkit-text-stroke:0.15px #333;">Expt3</div>
<div class="t" style="left:2097.30px;top:340.93px;font-size:18.90px;line-height:18.90px;font-weight:normal;color:#333;font-family:'Liberation Sans', sans-serif;transform:scaleX(0.8794);-webkit-text-stroke:0.15px #333;">Expt3</div>
<div class="t" style="left:2179.90px;top:340.93px;font-size:18.90px;line-height:18.90px;font-weight:normal;color:#333;font-family:'Liberation Sans', sans-serif;transform:scaleX(0.8794);-webkit-text-stroke:0.15px #333;">Expt3</div>
<div class="t" style="left:2262.50px;top:340.93px;font-size:18.90px;line-height:18.90px;font-weight:normal;color:#333;font-family:'Liberation Sans', sans-serif;transform:scaleX(0.8794);-webkit-text-stroke:0.15px #333;">Expt3</div>
<div class="t" style="left:2345.10px;top:340.93px;font-size:18.90px;line-height:18.90px;font-weight:normal;color:#333;font-family:'Liberation Sans', sans-serif;transform:scaleX(0.8794);-webkit-text-stroke:0.15px #333;">Expt3</div>
<div class="r" style="left:815.00px;top:372.00px;width:47.00px;height:47.00px;background:#f8f8f8;"></div>
<div class="r" style="left:862.00px;top:372.00px;width:1553.00px;height:47.00px;background:#90ee90;"></div>
<div class="r" style="left:862.00px;top:372.00px;width:1553.00px;height:1.00px;background:rgba(255,255,255,0.3);"></div>
<div class="r" style="left:815.00px;top:372.00px;width:47.00px;height:1.00px;background:#efefef;"></div>
<div class="t" style="left:828.20px;top:387.56px;font-size:18.90px;line-height:18.90px;font-weight:normal;color:#333;font-family:'Liberation Sans', sans-serif;transform:scaleX(0.8610);-webkit-text-stroke:0.15px #333;">14</div>
<div class="t" style="left:874.70px;top:387.56px;font-size:18.90px;line-height:18.90px;font-weight:normal;color:#333;font-family:'Liberation Sans', sans-serif;transform:scaleX(0.8794);-webkit-text-stroke:0.15px #333;">Expt3</div>
<div class="t" style="left:946.30px;top:387.56px;font-size:18.90px;line-height:18.90px;font-weight:normal;color:#333;font-family:'Liberation Sans', sans-serif;transform:scaleX(0.8794);-webkit-text-stroke:0.15px #333;">Expt3</div>
<div class="t" style="left:1017.90px;top:387.56px;font-size:18.90px;line-height:18.90px;font-weight:normal;color:#333;font-family:'Liberation Sans', sans-serif;transform:scaleX(0.8794);-webkit-text-stroke:0.15px #333;">Expt3</div>
<div class="t" style="left:1089.50px;top:387.56px;font-size:18.90px;line-height:18.90px;font-weight:normal;color:#333;font-family:'Liberation Sans', sans-serif;transform:scaleX(0.8794);-webkit-text-stroke:0.15px #333;">Expt3</div>
<div class="t" style="left:1161.10px;top:387.56px;font-size:18.90px;line-height:18.90px;font-weight:normal;color:#333;font-family:'Liberation Sans', sans-serif;transform:scaleX(0.8794);-webkit-text-stroke:0.15px #333;">Expt3</div>
<div class="t" style="left:1232.70px;top:387.56px;font-size:18.90px;line-height:18.90px;font-weight:normal;color:#333;font-family:'Liberation Sans', sans-serif;transform:scaleX(0.8794);-webkit-text-stroke:0.15px #333;">Expt3</div>
<div class="t" style="left:1304.30px;top:387.56px;font-size:18.90px;line-height:18.90px;font-weight:normal;color:#333;font-family:'Liberation Sans', sans-serif;transform:scaleX(0.8794);-webkit-text-stroke:0.15px #333;">Expt3</div>
<div class="t" style="left:1375.90px;top:387.56px;font-size:18.90px;line-height:18.90px;font-weight:normal;color:#333;font-family:'Liberation Sans', sans-serif;transform:scaleX(0.8794);-webkit-text-stroke:0.15px #333;">Expt3</div>
<div class="t" style="left:1447.50px;top:387.56px;font-size:18.90px;line-height:18.90px;font-weight:normal;color:#333;font-family:'Liberation Sans', sans-serif;transform:scaleX(0.8794);-webkit-text-stroke:0.15px #333;">Expt3</div>
<div class="t" style="left:1519.10px;top:387.56px;font-size:18.90px;line-height:18.90px;font-weight:normal;color:#333;font-family:'Liberation Sans', sans-serif;transform:scaleX(0.8794);-webkit-text-stroke:0.15px #333;">Expt3</div>
<div class="t" style="left:1601.70px;top:387.56px;font-size:18.90px;line-height:18.90px;font-weight:normal;color:#333;font-family:'Liberation Sans', sans-serif;transform:scaleX(0.8794);-webkit-text-stroke:0.15px #333;">Expt3</div>
<div class="t" style="left:1684.30px;top:387.56px;font-size:18.90px;line-height:18.90px;font-weight:normal;color:#333;font-family:'Liberation Sans', sans-serif;transform:scaleX(0.8794);-webkit-text-stroke:0.15px #333;">Expt3</div>
<div class="t" style="left:1766.90px;top:387.56px;font-size:18.90px;line-height:18.90px;font-weight:normal;color:#333;font-family:'Liberation Sans', sans-serif;transform:scaleX(0.8794);-webkit-text-stroke:0.15px #333;">Expt3</div>
<div class="t" style="left:1849.50px;top:387.56px;font-size:18.90px;line-height:18.90px;font-weight:normal;color:#333;font-family:'Liberation Sans', sans-serif;transform:scaleX(0.8794);-webkit-text-stroke:0.15px #333;">Expt3</div>
<div class="t" style="left:1932.10px;top:387.56px;font-size:18.90px;line-height:18.90px;font-weight:normal;color:#333;font-family:'Liberation Sans', sans-serif;transform:scaleX(0.8794);-webkit-text-stroke:0.15px #333;">Expt3</div>
<div class="t" style="left:2014.70px;top:387.56px;font-size:18.90px;line-height:18.90px;font-weight:normal;color:#333;font-family:'Liberation Sans', sans-serif;transform:scaleX(0.8794);-webkit-text-stroke:0.15px #333;">Expt3</div>
<div class="t" style="left:2097.30px;top:387.56px;font-size:18.90px;line-height:18.90px;font-weight:normal;color:#333;font-family:'Liberation Sans', sans-serif;transform:scaleX(0.8794);-webkit-text-stroke:0.15px #333;">Expt3</div>
<div class="t" style="left:2179.90px;top:387.56px;font-size:18.90px;line-height:18.90px;font-weight:normal;color:#333;font-family:'Liberation Sans', sans-serif;transform:scaleX(0.8794);-webkit-text-stroke:0.15px #333;">Expt3</div>
<div class="t" style="left:2262.50px;top:387.56px;font-size:18.90px;line-height:18.90px;font-weight:normal;color:#333;font-family:'Liberation Sans', sans-serif;transform:scaleX(0.8794);-webkit-text-stroke:0.15px #333;">Expt3</div>
<div class="t" style="left:2345.10px;top:387.56px;font-size:18.90px;line-height:18.90px;font-weight:normal;color:#333;font-family:'Liberation Sans', sans-serif;transform:scaleX(0.8794);-webkit-text-stroke:0.15px #333;">Expt3</div>
<div class="r" style="left:815.00px;top:419.00px;width:47.00px;height:46.00px;background:#ffffff;"></div>
<div class="r" style="left:862.00px;top:419.00px;width:1553.00px;height:46.00px;background:#90ee90;"></div>
<div class="r" style="left:862.00px;top:419.00px;width:1553.00px;height:1.00px;background:rgba(255,255,255,0.3);"></div>
<div class="r" style="left:815.00px;top:419.00px;width:47.00px;height:1.00px;background:#efefef;"></div>
<div class="t" style="left:828.20px;top:434.19px;font-size:18.90px;line-height:18.90px;font-weight:normal;color:#333;font-family:'Liberation Sans', sans-serif;transform:scaleX(0.8610);-webkit-text-stroke:0.15px #333;">13</div>
<div class="t" style="left:874.70px;top:434.19px;font-size:18.90px;line-height:18.90px;font-weight:normal;color:#333;font-family:'Liberation Sans', sans-serif;transform:scaleX(0.8794);-webkit-text-stroke:0.15px #333;">Expt3</div>
<div class="t" style="left:946.30px;top:434.19px;font-size:18.90px;line-height:18.90px;font-weight:normal;color:#333;font-family:'Liberation Sans', sans-serif;transform:scaleX(0.8794);-webkit-text-stroke:0.15px #333;">Expt3</div>
<div class="t" style="left:1017.90px;top:434.19px;font-size:18.90px;line-height:18.90px;font-weight:normal;color:#333;font-family:'Liberation Sans', sans-serif;transform:scaleX(0.8794);-webkit-text-stroke:0.15px #333;">Expt3</div>
<div class="t" style="left:1089.50px;top:434.19px;font-size:18.90px;line-height:18.90px;font-weight:normal;color:#333;font-family:'Liberation Sans', sans-serif;transform:scaleX(0.8794);-webkit-text-stroke:0.15px #333;">Expt3</div>
<div class="t" style="left:1161.10px;top:434.19px;font-size:18.90px;line-height:18.90px;font-weight:normal;color:#333;font-family:'Liberation Sans', sans-serif;transform:scaleX(0.8794);-webkit-text-stroke:0.15px #333;">Expt3</div>
<div class="t" style="left:1232.70px;top:434.19px;font-size:18.90px;line-height:18.90px;font-weight:normal;color:#333;font-family:'Liberation Sans', sans-serif;transform:scaleX(0.8794);-webkit-text-stroke:0.15px #333;">Expt3</div>
<div class="t" style="left:1304.30px;top:434.19px;font-size:18.90px;line-height:18.90px;font-weight:normal;color:#333;font-family:'Liberation Sans', sans-serif;transform:scaleX(0.8794);-webkit-text-stroke:0.15px #333;">Expt3</div>
<div class="t" style="left:1375.90px;top:434.19px;font-size:18.90px;line-height:18.90px;font-weight:normal;color:#333;font-family:'Liberation Sans', sans-serif;transform:scaleX(0.8794);-webkit-text-stroke:0.15px #333;">Expt3</div>
<div class="t" style="left:1447.50px;top:434.19px;font-size:18.90px;line-height:18.90px;font-weight:normal;color:#333;font-family:'Liberation Sans', sans-serif;transform:scaleX(0.8794);-webkit-text-stroke:0.15px #333;">Expt3</div>
<div class="t" style="left:1519.10px;top:434.19px;font-size:18.90px;line-height:18.90px;font-weight:normal;color:#333;font-family:'Liberation Sans', sans-serif;transform:scaleX(0.8794);-webkit-text-stroke:0.15px #333;">Expt3</div>
<div class="t" style="left:1601.70px;top:434.19px;font-size:18.90px;line-height:18.90px;font-weight:normal;color:#333;font-family:'Liberation Sans', sans-serif;transform:scaleX(0.8794);-webkit-text-stroke:0.15px #333;">Expt3</div>
<div class="t" style="left:1684.30px;top:434.19px;font-size:18.90px;line-height:18.90px;font-weight:normal;color:#333;font-family:'Liberation Sans', sans-serif;transform:scaleX(0.8794);-webkit-text-stroke:0.15px #333;">Expt3</div>
<div class="t" style="left:1766.90px;top:434.19px;font-size:18.90px;line-height:18.90px;font-weight:normal;color:#333;font-family:'Liberation Sans', sans-serif;transform:scaleX(0.8794);-webkit-text-stroke:0.15px #333;">Expt3</div>
<div class="t" style="left:1849.50px;top:434.19px;font-size:18.90px;line-height:18.90px;font-weight:normal;color:#333;font-family:'Liberation Sans', sans-serif;transform:scaleX(0.8794);-webkit-text-stroke:0.15px #333;">Expt3</div>
<div class="t" style="left:1932.10px;top:434.19px;font-size:18.90px;line-height:18.90px;font-weight:normal;color:#333;font-family:'Liberation Sans', sans-serif;transform:scaleX(0.8794);-webkit-text-stroke:0.15px #333;">Expt3</div>
<div class="t" style="left:2014.70px;top:434.19px;font-size:18.90px;line-height:18.90px;font-weight:normal;color:#333;font-family:'Liberation Sans', sans-serif;transform:scaleX(0.8794);-webkit-text-stroke:0.15px #333;">Expt3</div>
<div class="t" style="left:2097.30px;top:434.19px;font-size:18.90px;line-height:18.90px;font-weight:normal;color:#333;font-family:'Liberation Sans', sans-serif;transform:scaleX(0.8794);-webkit-text-stroke:0.15px #333;">Expt3</div>
<div class="t" style="left:2179.90px;top:434.19px;font-size:18.90px;line-height:18.90px;font-weight:normal;color:#333;font-family:'Liberation Sans', sans-serif;transform:scaleX(0.8794);-webkit-text-stroke:0.15px #333;">Expt3</div>
<div class="t" style="left:2262.50px;top:434.19px;font-size:18.90px;line-height:18.90px;font-weight:normal;color:#333;font-family:'Liberation Sans', sans-serif;transform:scaleX(0.8794);-webkit-text-stroke:0.15px #333;">Expt3</div>
<div class="t" style="left:2345.10px;top:434.19px;font-size:18.90px;line-height:18.90px;font-weight:normal;color:#333;font-family:'Liberation Sans', sans-serif;transform:scaleX(0.8794);-webkit-text-stroke:0.15px #333;">Expt3</div>
<div class="r" style="left:815.00px;top:465.00px;width:47.00px;height:47.00px;background:#f8f8f8;"></div>
<div class="r" style="left:862.00px;top:465.00px;width:809.60px;height:47.00px;background:#90ee90;"></div>
<div class="r" style="left:862.00px;top:465.00px;width:809.60px;height:1.00px;background:rgba(255,255,255,0.3);"></div>
<div class="r" style="left:1671.60px;top:465.00px;width:743.40px;height:47.00px;background:#5f9ea0;"></div>
<div class="r" style="left:1671.60px;top:465.00px;width:743.40px;height:1.00px;background:rgba(255,255,255,0.32);"></div>
<div class="r" style="left:815.00px;top:465.00px;width:47.00px;height:1.00px;background:#efefef;"></div>
<div class="t" style="left:828.20px;top:480.82px;font-size:18.90px;line-height:18.90px;font-weight:normal;color:#333;font-family:'Liberation Sans', sans-serif;transform:scaleX(0.8610);-webkit-text-stroke:0.15px #333;">12</div>
<div class="t" style="left:874.70px;top:480.82px;font-size:18.90px;line-height:18.90px;font-weight:normal;color:#333;font-family:'Liberation Sans', sans-serif;transform:scaleX(0.8794);-webkit-text-stroke:0.15px #333;">Expt3</div>
<div class="t" style="left:946.30px;top:480.82px;font-size:18.90px;line-height:18.90px;font-weight:normal;color:#333;font-family:'Liberation Sans', sans-serif;transform:scaleX(0.8794);-webkit-text-stroke:0.15px #333;">Expt3</div>
<div class="t" style="left:1017.90px;top:480.82px;font-size:18.90px;line-height:18.90px;font-weight:normal;color:#333;font-family:'Liberation Sans', sans-serif;transform:scaleX(0.8794);-webkit-text-stroke:0.15px #333;">Expt3</div>
<div class="t" style="left:1089.50px;top:480.82px;font-size:18.90px;line-height:18.90px;font-weight:normal;color:#333;font-family:'Liberation Sans', sans-serif;transform:scaleX(0.8794);-webkit-text-stroke:0.15px #333;">Expt3</div>
<div class="t" style="left:1161.10px;top:480.82px;font-size:18.90px;line-height:18.90px;font-weight:normal;color:#333;font-family:'Liberation Sans', sans-serif;transform:scaleX(0.8794);-webkit-text-stroke:0.15px #333;">Expt3</div>
<div class="t" style="left:1232.70px;top:480.82px;font-size:18.90px;line-height:18.90px;font-weight:normal;color:#333;font-family:'Liberation Sans', sans-serif;transform:scaleX(0.8794);-webkit-text-stroke:0.15px #333;">Expt3</div>
<div class="t" style="left:1304.30px;top:480.82px;font-size:18.90px;line-height:18.90px;font-weight:normal;color:#333;font-family:'Liberation Sans', sans-serif;transform:scaleX(0.8794);-webkit-text-stroke:0.15px #333;">Expt3</div>
<div class="t" style="left:1375.90px;top:480.82px;font-size:18.90px;line-height:18.90px;font-weight:normal;color:#333;font-family:'Liberation Sans', sans-serif;transform:scaleX(0.8794);-webkit-text-stroke:0.15px #333;">Expt3</div>
<div class="t" style="left:1447.50px;top:480.82px;font-size:18.90px;line-height:18.90px;font-weight:normal;color:#333;font-family:'Liberation Sans', sans-serif;transform:scaleX(0.8794);-webkit-text-stroke:0.15px #333;">Expt3</div>
<div class="t" style="left:1519.10px;top:480.82px;font-size:18.90px;line-height:18.90px;font-weight:normal;color:#333;font-family:'Liberation Sans', sans-serif;transform:scaleX(0.8794);-webkit-text-stroke:0.15px #333;">Expt3</div>
<div class="t" style="left:1601.70px;top:480.82px;font-size:18.90px;line-height:18.90px;font-weight:normal;color:#333;font-family:'Liberation Sans', sans-serif;transform:scaleX(0.8794);-webkit-text-stroke:0.15px #333;">Expt3</div>
<div class="t" style="left:1684.30px;top:480.82px;font-size:18.90px;line-height:18.90px;font-weight:normal;color:#333;font-family:'Liberation Sans', sans-serif;transform:scaleX(0.8794);-webkit-text-stroke:0.15px #333;">Expt2</div>
<div class="t" style="left:1766.90px;top:480.82px;font-size:18.90px;line-height:18.90px;font-weight:normal;color:#333;font-family:'Liberation Sans', sans-serif;transform:scaleX(0.8794);-webkit-text-stroke:0.15px #333;">Expt2</div>
<div class="t" style="left:1849.50px;top:480.82px;font-size:18.90px;line-height:18.90px;font-weight:normal;color:#333;font-family:'Liberation Sans', sans-serif;transform:scaleX(0.8794);-webkit-text-stroke:0.15px #333;">Expt2</div>
<div class="t" style="left:1932.10px;top:480.82px;font-size:18.90px;line-height:18.90px;font-weight:normal;color:#333;font-family:'Liberation Sans', sans-serif;transform:scaleX(0.8794);-webkit-text-stroke:0.15px #333;">Expt2</div>
<div class="t" style="left:2014.70px;top:480.82px;font-size:18.90px;line-height:18.90px;font-weight:normal;color:#333;font-family:'Liberation Sans', sans-serif;transform:scaleX(0.8794);-webkit-text-stroke:0.15px #333;">Expt2</div>
<div class="t" style="left:2097.30px;top:480.82px;font-size:18.90px;line-height:18.90px;font-weight:normal;color:#333;font-family:'Liberation Sans', sans-serif;transform:scaleX(0.8794);-webkit-text-stroke:0.15px #333;">Expt2</div>
<div class="t" style="left:2179.90px;top:480.82px;font-size:18.90px;line-height:18.90px;font-weight:normal;color:#333;font-family:'Liberation Sans', sans-serif;transform:scaleX(0.8794);-webkit-text-stroke:0.15px #333;">Expt2</div>
<div class="t" style="left:2262.50px;top:480.82px;font-size:18.90px;line-height:18.90px;font-weight:normal;color:#333;font-family:'Liberation Sans', sans-serif;transform:scaleX(0.8794);-webkit-text-stroke:0.15px #333;">Expt2</div>
<div class="t" style="left:2345.10px;top:480.82px;font-size:18.90px;line-height:18.90px;font-weight:normal;color:#333;font-family:'Liberation Sans', sans-serif;transform:scaleX(0.8794);-webkit-text-stroke:0.15px #333;">Expt2</div>
<div class="r" style="left:815.00px;top:512.00px;width:47.00px;height:47.00px;background:#ffffff;"></div>
<div class="r" style="left:862.00px;top:512.00px;width:1553.00px;height:47.00px;background:#5f9ea0;"></div>
<div class="r" style="left:862.00px;top:512.00px;width:1553.00px;height:1.00px;background:rgba(255,255,255,0.32);"></div>
<div class="r" style="left:815.00px;top:512.00px;width:47.00px;height:1.00px;background:#efefef;"></div>
<div class="t" style="left:828.20px;top:527.45px;font-size:18.90px;line-height:18.90px;font-weight:normal;color:#333;font-family:'Liberation Sans', sans-serif;transform:scaleX(0.9233);-webkit-text-stroke:0.15px #333;">11</div>
<div class="t" style="left:874.70px;top:527.45px;font-size:18.90px;line-height:18.90px;font-weight:normal;color:#333;font-family:'Liberation Sans', sans-serif;transform:scaleX(0.8794);-webkit-text-stroke:0.15px #333;">Expt2</div>
<div class="t" style="left:946.30px;top:527.45px;font-size:18.90px;line-height:18.90px;font-weight:normal;color:#333;font-family:'Liberation Sans', sans-serif;transform:scaleX(0.8794);-webkit-text-stroke:0.15px #333;">Expt2</div>
<div class="t" style="left:1017.90px;top:527.45px;font-size:18.90px;line-height:18.90px;font-weight:normal;color:#333;font-family:'Liberation Sans', sans-serif;transform:scaleX(0.8794);-webkit-text-stroke:0.15px #333;">Expt2</div>
<div class="t" style="left:1089.50px;top:527.45px;font-size:18.90px;line-height:18.90px;font-weight:normal;color:#333;font-family:'Liberation Sans', sans-serif;transform:scaleX(0.8794);-webkit-text-stroke:0.15px #333;">Expt2</div>
<div class="t" style="left:1161.10px;top:527.45px;font-size:18.90px;line-height:18.90px;font-weight:normal;color:#333;font-family:'Liberation Sans', sans-serif;transform:scaleX(0.8794);-webkit-text-stroke:0.15px #333;">Expt2</div>
<div class="t" style="left:1232.70px;top:527.45px;font-size:18.90px;line-height:18.90px;font-weight:normal;color:#333;font-family:'Liberation Sans', sans-serif;transform:scaleX(0.8794);-webkit-text-stroke:0.15px #333;">Expt2</div>
<div class="t" style="left:1304.30px;top:527.45px;font-size:18.90px;line-height:18.90px;font-weight:normal;color:#333;font-family:'Liberation Sans', sans-serif;transform:scaleX(0.8794);-webkit-text-stroke:0.15px #333;">Expt2</div>
<div class="t" style="left:1375.90px;top:527.45px;font-size:18.90px;line-height:18.90px;font-weight:normal;color:#333;font-family:'Liberation Sans', sans-serif;transform:scaleX(0.8794);-webkit-text-stroke:0.15px #333;">Expt2</div>
<div class="t" style="left:1447.50px;top:527.45px;font-size:18.90px;line-height:18.90px;font-weight:normal;color:#333;font-family:'Liberation Sans', sans-serif;transform:scaleX(0.8794);-webkit-text-stroke:0.15px #333;">Expt2</div>
<div class="t" style="left:1519.10px;top:527.45px;font-size:18.90px;line-height:18.90px;font-weight:normal;color:#333;font-family:'Liberation Sans', sans-serif;transform:scaleX(0.8794);-webkit-text-stroke:0.15px #333;">Expt2</div>
<div class="t" style="left:1601.70px;top:527.45px;font-size:18.90px;line-height:18.90px;font-weight:normal;color:#333;font-family:'Liberation Sans', sans-serif;transform:scaleX(0.8794);-webkit-text-stroke:0.15px #333;">Expt2</div>
<div class="t" style="left:1684.30px;top:527.45px;font-size:18.90px;line-height:18.90px;font-weight:normal;color:#333;font-family:'Liberation Sans', sans-serif;transform:scaleX(0.8794);-webkit-text-stroke:0.15px #333;">Expt2</div>
<div class="t" style="left:1766.90px;top:527.45px;font-size:18.90px;line-height:18.90px;font-weight:normal;color:#333;font-family:'Liberation Sans', sans-serif;transform:scaleX(0.8794);-webkit-text-stroke:0.15px #333;">Expt2</div>
<div class="t" style="left:1849.50px;top:527.45px;font-size:18.90px;line-height:18.90px;font-weight:normal;color:#333;font-family:'Liberation Sans', sans-serif;transform:scaleX(0.8794);-webkit-text-stroke:0.15px #333;">Expt2</div>
<div class="t" style="left:1932.10px;top:527.45px;font-size:18.90px;line-height:18.90px;font-weight:normal;color:#333;font-family:'Liberation Sans', sans-serif;transform:scaleX(0.8794);-webkit-text-stroke:0.15px #333;">Expt2</div>
<div class="t" style="left:2014.70px;top:527.45px;font-size:18.90px;line-height:18.90px;font-weight:normal;color:#333;font-family:'Liberation Sans', sans-serif;transform:scaleX(0.8794);-webkit-text-stroke:0.15px #333;">Expt2</div>
<div class="t" style="left:2097.30px;top:527.45px;font-size:18.90px;line-height:18.90px;font-weight:normal;color:#333;font-family:'Liberation Sans', sans-serif;transform:scaleX(0.8794);-webkit-text-stroke:0.15px #333;">Expt2</div>
<div class="t" style="left:2179.90px;top:527.45px;font-size:18.90px;line-height:18.90px;font-weight:normal;color:#333;font-family:'Liberation Sans', sans-serif;transform:scaleX(0.8794);-webkit-text-stroke:0.15px #333;">Expt2</div>
<div class="t" style="left:2262.50px;top:527.45px;font-size:18.90px;line-height:18.90px;font-weight:normal;color:#333;font-family:'Liberation Sans', sans-serif;transform:scaleX(0.8794);-webkit-text-stroke:0.15px #333;">Expt2</div>
<div class="t" style="left:2345.10px;top:527.45px;font-size:18.90px;line-height:18.90px;font-weight:normal;color:#333;font-family:'Liberation Sans', sans-serif;transform:scaleX(0.8794);-webkit-text-stroke:0.15px #333;">Expt2</div>
<div class="r" style="left:815.00px;top:559.00px;width:47.00px;height:46.00px;background:#f8f8f8;"></div>
<div class="r" style="left:862.00px;top:559.00px;width:1553.00px;height:46.00px;background:#5f9ea0;"></div>
<div class="r" style="left:862.00px;top:559.00px;width:1553.00px;height:1.00px;background:rgba(255,255,255,0.32);"></div>
<div class="r" style="left:815.00px;top:559.00px;width:47.00px;height:1.00px;background:#efefef;"></div>
<div class="t" style="left:828.20px;top:574.08px;font-size:18.90px;line-height:18.90px;font-weight:normal;color:#333;font-family:'Liberation Sans', sans-serif;transform:scaleX(0.8610);-webkit-text-stroke:0.15px #333;">10</div>
<div class="t" style="left:874.70px;top:574.08px;font-size:18.90px;line-height:18.90px;font-weight:normal;color:#333;font-family:'Liberation Sans', sans-serif;transform:scaleX(0.8794);-webkit-text-stroke:0.15px #333;">Expt2</div>
<div class="t" style="left:946.30px;top:574.08px;font-size:18.90px;line-height:18.90px;font-weight:normal;color:#333;font-family:'Liberation Sans', sans-serif;transform:scaleX(0.8794);-webkit-text-stroke:0.15px #333;">Expt2</div>
<div class="t" style="left:1017.90px;top:574.08px;font-size:18.90px;line-height:18.90px;font-weight:normal;color:#333;font-family:'Liberation Sans', sans-serif;transform:scaleX(0.8794);-webkit-text-stroke:0.15px #333;">Expt2</div>
<div class="t" style="left:1089.50px;top:574.08px;font-size:18.90px;line-height:18.90px;font-weight:normal;color:#333;font-family:'Liberation Sans', sans-serif;transform:scaleX(0.8794);-webkit-text-stroke:0.15px #333;">Expt2</div>
<div class="t" style="left:1161.10px;top:574.08px;font-size:18.90px;line-height:18.90px;font-weight:normal;color:#333;font-family:'Liberation Sans', sans-serif;transform:scaleX(0.8794);-webkit-text-stroke:0.15px #333;">Expt2</div>
<div class="t" style="left:1232.70px;top:574.08px;font-size:18.90px;line-height:18.90px;font-weight:normal;color:#333;font-family:'Liberation Sans', sans-serif;transform:scaleX(0.8794);-webkit-text-stroke:0.15px #333;">Expt2</div>
<div class="t" style="left:1304.30px;top:574.08px;font-size:18.90px;line-height:18.90px;font-weight:normal;color:#333;font-family:'Liberation Sans', sans-serif;transform:scaleX(0.8794);-webkit-text-stroke:0.15px #333;">Expt2</div>
<div class="t" style="left:1375.90px;top:574.08px;font-size:18.90px;line-height:18.90px;font-weight:normal;color:#333;font-family:'Liberation Sans', sans-serif;transform:scaleX(0.8794);-webkit-text-stroke:0.15px #333;">Expt2</div>
<div class="t" style="left:1447.50px;top:574.08px;font-size:18.90px;line-height:18.90px;font-weight:normal;color:#333;font-family:'Liberation Sans', sans-serif;transform:scaleX(0.8794);-webkit-text-stroke:0.15px #333;">Expt2</div>
<div class="t" style="left:1519.10px;top:574.08px;font-size:18.90px;line-height:18.90px;font-weight:normal;color:#333;font-family:'Liberation Sans', sans-serif;transform:scaleX(0.8794);-webkit-text-stroke:0.15px #333;">Expt2</div>
<div class="t" style="left:1601.70px;top:574.08px;font-size:18.90px;line-height:18.90px;font-weight:normal;color:#333;font-family:'Liberation Sans', sans-serif;transform:scaleX(0.8794);-webkit-text-stroke:0.15px #333;">Expt2</div>
<div class="t" style="left:1684.30px;top:574.08px;font-size:18.90px;line-height:18.90px;font-weight:normal;color:#333;font-family:'Liberation Sans', sans-serif;transform:scaleX(0.8794);-webkit-text-stroke:0.15px #333;">Expt2</div>
<div class="t" style="left:1766.90px;top:574.08px;font-size:18.90px;line-height:18.90px;font-weight:normal;color:#333;font-family:'Liberation Sans', sans-serif;transform:scaleX(0.8794);-webkit-text-stroke:0.15px #333;">Expt2</div>
<div class="t" style="left:1849.50px;top:574.08px;font-size:18.90px;line-height:18.90px;font-weight:normal;color:#333;font-family:'Liberation Sans', sans-serif;transform:scaleX(0.8794);-webkit-text-stroke:0.15px #333;">Expt2</div>
<div class="t" style="left:1932.10px;top:574.08px;font-size:18.90px;line-height:18.90px;font-weight:normal;color:#333;font-family:'Liberation Sans', sans-serif;transform:scaleX(0.8794);-webkit-text-stroke:0.15px #333;">Expt2</div>
<div class="t" style="left:2014.70px;top:574.08px;font-size:18.90px;line-height:18.90px;font-weight:normal;color:#333;font-family:'Liberation Sans', sans-serif;transform:scaleX(0.8794);-webkit-text-stroke:0.15px #333;">Expt2</div>
<div class="t" style="left:2097.30px;top:574.08px;font-size:18.90px;line-height:18.90px;font-weight:normal;color:#333;font-family:'Liberation Sans', sans-serif;transform:scaleX(0.8794);-webkit-text-stroke:0.15px #333;">Expt2</div>
<div class="t" style="left:2179.90px;top:574.08px;font-size:18.90px;line-height:18.90px;font-weight:normal;color:#333;font-family:'Liberation Sans', sans-serif;transform:scaleX(0.8794);-webkit-text-stroke:0.15px #333;">Expt2</div>
<div class="t" style="left:2262.50px;top:574.08px;font-size:18.90px;line-height:18.90px;font-weight:normal;color:#333;font-family:'Liberation Sans', sans-serif;transform:scaleX(0.8794);-webkit-text-stroke:0.15px #333;">Expt2</div>
<div class="t" style="left:2345.10px;top:574.08px;font-size:18.90px;line-height:18.90px;font-weight:normal;color:#333;font-family:'Liberation Sans', sans-serif;transform:scaleX(0.8794);-webkit-text-stroke:0.15px #333;">Expt2</div>
<div class="r" style="left:815.00px;top:605.00px;width:47.00px;height:47.00px;background:#ffffff;"></div>
<div class="r" style="left:862.00px;top:605.00px;width:1553.00px;height:47.00px;background:#5f9ea0;"></div>
<div class="r" style="left:862.00px;top:605.00px;width:1553.00px;height:1.00px;background:rgba(255,255,255,0.32);"></div>
<div class="r" style="left:815.00px;top:605.00px;width:47.00px;height:1.00px;background:#efefef;"></div>
<div class="t" style="left:828.20px;top:620.71px;font-size:18.90px;line-height:18.90px;font-weight:normal;color:#333;font-family:'Liberation Sans', sans-serif;-webkit-text-stroke:0.15px #333;">9</div>
<div class="t" style="left:874.70px;top:620.71px;font-size:18.90px;line-height:18.90px;font-weight:normal;color:#333;font-family:'Liberation Sans', sans-serif;transform:scaleX(0.8794);-webkit-text-stroke:0.15px #333;">Expt2</div>
<div class="t" style="left:946.30px;top:620.71px;font-size:18.90px;line-height:18.90px;font-weight:normal;color:#333;font-family:'Liberation Sans', sans-serif;transform:scaleX(0.8794);-webkit-text-stroke:0.15px #333;">Expt2</div>
<div class="t" style="left:1017.90px;top:620.71px;font-size:18.90px;line-height:18.90px;font-weight:normal;color:#333;font-family:'Liberation Sans', sans-serif;transform:scaleX(0.8794);-webkit-text-stroke:0.15px #333;">Expt2</div>
<div class="t" style="left:1089.50px;top:620.71px;font-size:18.90px;line-height:18.90px;font-weight:normal;color:#333;font-family:'Liberation Sans', sans-serif;transform:scaleX(0.8794);-webkit-text-stroke:0.15px #333;">Expt2</div>
<div class="t" style="left:1161.10px;top:620.71px;font-size:18.90px;line-height:18.90px;font-weight:normal;color:#333;font-family:'Liberation Sans', sans-serif;transform:scaleX(0.8794);-webkit-text-stroke:0.15px #333;">Expt2</div>
<div class="t" style="left:1232.70px;top:620.71px;font-size:18.90px;line-height:18.90px;font-weight:normal;color:#333;font-family:'Liberation Sans', sans-serif;transform:scaleX(0.8794);-webkit-text-stroke:0.15px #333;">Expt2</div>
<div class="t" style="left:1304.30px;top:620.71px;font-size:18.90px;line-height:18.90px;font-weight:normal;color:#333;font-family:'Liberation Sans', sans-serif;transform:scaleX(0.8794);-webkit-text-stroke:0.15px #333;">Expt2</div>
<div class="t" style="left:1375.90px;top:620.71px;font-size:18.90px;line-height:18.90px;font-weight:normal;color:#333;font-family:'Liberation Sans', sans-serif;transform:scaleX(0.8794);-webkit-text-stroke:0.15px #333;">Expt2</div>
<div class="t" style="left:1447.50px;top:620.71px;font-size:18.90px;line-height:18.90px;font-weight:normal;color:#333;font-family:'Liberation Sans', sans-serif;transform:scaleX(0.8794);-webkit-text-stroke:0.15px #333;">Expt2</div>
<div class="t" style="left:1519.10px;top:620.71px;font-size:18.90px;line-height:18.90px;font-weight:normal;color:#333;font-family:'Liberation Sans', sans-serif;transform:scaleX(0.8794);-webkit-text-stroke:0.15px #333;">Expt2</div>
<div class="t" style="left:1601.70px;top:620.71px;font-size:18.90px;line-height:18.90px;font-weight:normal;color:#333;font-family:'Liberation Sans', sans-serif;transform:scaleX(0.8794);-webkit-text-stroke:0.15px #333;">Expt2</div>
<div class="t" style="left:1684.30px;top:620.71px;font-size:18.90px;line-height:18.90px;font-weight:normal;color:#333;font-family:'Liberation Sans', sans-serif;transform:scaleX(0.8794);-webkit-text-stroke:0.15px #333;">Expt2</div>
<div class="t" style="left:1766.90px;top:620.71px;font-size:18.90px;line-height:18.90px;font-weight:normal;color:#333;font-family:'Liberation Sans', sans-serif;transform:scaleX(0.8794);-webkit-text-stroke:0.15px #333;">Expt2</div>
<div class="t" style="left:1849.50px;top:620.71px;font-size:18.90px;line-height:18.90px;font-weight:normal;color:#333;font-family:'Liberation Sans', sans-serif;transform:scaleX(0.8794);-webkit-text-stroke:0.15px #333;">Expt2</div>
<div class="t" style="left:1932.10px;top:620.71px;font-size:18.90px;line-height:18.90px;font-weight:normal;color:#333;font-family:'Liberation Sans', sans-serif;transform:scaleX(0.8794);-webkit-text-stroke:0.15px #333;">Expt2</div>
<div class="t" style="left:2014.70px;top:620.71px;font-size:18.90px;line-height:18.90px;font-weight:normal;color:#333;font-family:'Liberation Sans', sans-serif;transform:scaleX(0.8794);-webkit-text-stroke:0.15px #333;">Expt2</div>
<div class="t" style="left:2097.30px;top:620.71px;font-size:18.90px;line-height:18.90px;font-weight:normal;color:#333;font-family:'Liberation Sans', sans-serif;transform:scaleX(0.8794);-webkit-text-stroke:0.15px #333;">Expt2</div>
<div class="t" style="left:2179.90px;top:620.71px;font-size:18.90px;line-height:18.90px;font-weight:normal;color:#333;font-family:'Liberation Sans', sans-serif;transform:scaleX(0.8794);-webkit-text-stroke:0.15px #333;">Expt2</div>
<div class="t" style="left:2262.50px;top:620.71px;font-size:18.90px;line-height:18.90px;font-weight:normal;color:#333;font-family:'Liberation Sans', sans-serif;transform:scaleX(0.8794);-webkit-text-stroke:0.15px #333;">Expt2</div>
<div class="t" style="left:2345.10px;top:620.71px;font-size:18.90px;line-height:18.90px;font-weight:normal;color:#333;font-family:'Liberation Sans', sans-serif;transform:scaleX(0.8794);-webkit-text-stroke:0.15px #333;">Expt2</div>
<div class="r" style="left:815.00px;top:652.00px;width:47.00px;height:46.00px;background:#f8f8f8;"></div>
<div class="r" style="left:862.00px;top:652.00px;width:1553.00px;height:46.00px;background:#5f9ea0;"></div>
<div class="r" style="left:862.00px;top:652.00px;width:1553.00px;height:1.00px;background:rgba(255,255,255,0.32);"></div>
<div class="r" style="left:815.00px;top:652.00px;width:47.00px;height:1.00px;background:#efefef;"></div>
<div class="t" style="left:828.20px;top:667.34px;font-size:18.90px;line-height:18.90px;font-weight:normal;color:#333;font-family:'Liberation Sans', sans-serif;-webkit-text-stroke:0.15px #333;">8</div>
<div class="t" style="left:874.70px;top:667.34px;font-size:18.90px;line-height:18.90px;font-weight:normal;color:#333;font-family:'Liberation Sans', sans-serif;transform:scaleX(0.8794);-webkit-text-stroke:0.15px #333;">Expt2</div>
<div class="t" style="left:946.30px;top:667.34px;font-size:18.90px;line-height:18.90px;font-weight:normal;color:#333;font-family:'Liberation Sans', sans-serif;transform:scaleX(0.8794);-webkit-text-stroke:0.15px #333;">Expt2</div>
<div class="t" style="left:1017.90px;top:667.34px;font-size:18.90px;line-height:18.90px;font-weight:normal;color:#333;font-family:'Liberation Sans', sans-serif;transform:scaleX(0.8794);-webkit-text-stroke:0.15px #333;">Expt2</div>
<div class="t" style="left:1089.50px;top:667.34px;font-size:18.90px;line-height:18.90px;font-weight:normal;color:#333;font-family:'Liberation Sans', sans-serif;transform:scaleX(0.8794);-webkit-text-stroke:0.15px #333;">Expt2</div>
<div class="t" style="left:1161.10px;top:667.34px;font-size:18.90px;line-height:18.90px;font-weight:normal;color:#333;font-family:'Liberation Sans', sans-serif;transform:scaleX(0.8794);-webkit-text-stroke:0.15px #333;">Expt2</div>
<div class="t" style="left:1232.70px;top:667.34px;font-size:18.90px;line-height:18.90px;font-weight:normal;color:#333;font-family:'Liberation Sans', sans-serif;transform:scaleX(0.8794);-webkit-text-stroke:0.15px #333;">Expt2</div>
<div class="t" style="left:1304.30px;top:667.34px;font-size:18.90px;line-height:18.90px;font-weight:normal;color:#333;font-family:'Liberation Sans', sans-serif;transform:scaleX(0.8794);-webkit-text-stroke:0.15px #333;">Expt2</div>
<div class="t" style="left:1375.90px;top:667.34px;font-size:18.90px;line-height:18.90px;font-weight:normal;color:#333;font-family:'Liberation Sans', sans-serif;transform:scaleX(0.8794);-webkit-text-stroke:0.15px #333;">Expt2</div>
<div class="t" style="left:1447.50px;top:667.34px;font-size:18.90px;line-height:18.90px;font-weight:normal;color:#333;font-family:'Liberation Sans', sans-serif;transform:scaleX(0.8794);-webkit-text-stroke:0.15px #333;">Expt2</div>
<div class="t" style="left:1519.10px;top:667.34px;font-size:18.90px;line-height:18.90px;font-weight:normal;color:#333;font-family:'Liberation Sans', sans-serif;transform:scaleX(0.8794);-webkit-text-stroke:0.15px #333;">Expt2</div>
<div class="t" style="left:1601.70px;top:667.34px;font-size:18.90px;line-height:18.90px;font-weight:normal;color:#333;font-family:'Liberation Sans', sans-serif;transform:scaleX(0.8794);-webkit-text-stroke:0.15px #333;">Expt2</div>
<div class="t" style="left:1684.30px;top:667.34px;font-size:18.90px;line-height:18.90px;font-weight:normal;color:#333;font-family:'Liberation Sans', sans-serif;transform:scaleX(0.8794);-webkit-text-stroke:0.15px #333;">Expt2</div>
<div class="t" style="left:1766.90px;top:667.34px;font-size:18.90px;line-height:18.90px;font-weight:normal;color:#333;font-family:'Liberation Sans', sans-serif;transform:scaleX(0.8794);-webkit-text-stroke:0.15px #333;">Expt2</div>
<div class="t" style="left:1849.50px;top:667.34px;font-size:18.90px;line-height:18.90px;font-weight:normal;color:#333;font-family:'Liberation Sans', sans-serif;transform:scaleX(0.8794);-webkit-text-stroke:0.15px #333;">Expt2</div>
<div class="t" style="left:1932.10px;top:667.34px;font-size:18.90px;line-height:18.90px;font-weight:normal;color:#333;font-family:'Liberation Sans', sans-serif;transform:scaleX(0.8794);-webkit-text-stroke:0.15px #333;">Expt2</div>
<div class="t" style="left:2014.70px;top:667.34px;font-size:18.90px;line-height:18.90px;font-weight:normal;color:#333;font-family:'Liberation Sans', sans-serif;transform:scaleX(0.8794);-webkit-text-stroke:0.15px #333;">Expt2</div>
<div class="t" style="left:2097.30px;top:667.34px;font-size:18.90px;line-height:18.90px;font-weight:normal;color:#333;font-family:'Liberation Sans', sans-serif;transform:scaleX(0.8794);-webkit-text-stroke:0.15px #333;">Expt2</div>
<div class="t" style="left:2179.90px;top:667.34px;font-size:18.90px;line-height:18.90px;font-weight:normal;color:#333;font-family:'Liberation Sans', sans-serif;transform:scaleX(0.8794);-webkit-text-stroke:0.15px #333;">Expt2</div>
<div class="t" style="left:2262.50px;top:667.34px;font-size:18.90px;line-height:18.90px;font-weight:normal;color:#333;font-family:'Liberation Sans', sans-serif;transform:scaleX(0.8794);-webkit-text-stroke:0.15px #333;">Expt2</div>
<div class="t" style="left:2345.10px;top:667.34px;font-size:18.90px;line-height:18.90px;font-weight:normal;color:#333;font-family:'Liberation Sans', sans-serif;transform:scaleX(0.8794);-webkit-text-stroke:0.15px #333;">Expt2</div>
<div class="r" style="left:815.00px;top:698.00px;width:47.00px;height:47.00px;background:#ffffff;"></div>
<div class="r" style="left:862.00px;top:698.00px;width:1553.00px;height:47.00px;background:#5f9ea0;"></div>
<div class="r" style="left:862.00px;top:698.00px;width:1553.00px;height:1.00px;background:rgba(255,255,255,0.32);"></div>
<div class="r" style="left:815.00px;top:698.00px;width:47.00px;height:1.00px;background:#efefef;"></div>
<div class="t" style="left:828.20px;top:713.97px;font-size:18.90px;line-height:18.90px;font-weight:normal;color:#333;font-family:'Liberation Sans', sans-serif;-webkit-text-stroke:0.15px #333;">7</div>
<div class="t" style="left:874.70px;top:713.97px;font-size:18.90px;line-height:18.90px;font-weight:normal;color:#333;font-family:'Liberation Sans', sans-serif;transform:scaleX(0.8794);-webkit-text-stroke:0.15px #333;">Expt2</div>
<div class="t" style="left:946.30px;top:713.97px;font-size:18.90px;line-height:18.90px;font-weight:normal;color:#333;font-family:'Liberation Sans', sans-serif;transform:scaleX(0.8794);-webkit-text-stroke:0.15px #333;">Expt2</div>
<div class="t" style="left:1017.90px;top:713.97px;font-size:18.90px;line-height:18.90px;font-weight:normal;color:#333;font-family:'Liberation Sans', sans-serif;transform:scaleX(0.8794);-webkit-text-stroke:0.15px #333;">Expt2</div>
<div class="t" style="left:1089.50px;top:713.97px;font-size:18.90px;line-height:18.90px;font-weight:normal;color:#333;font-family:'Liberation Sans', sans-serif;transform:scaleX(0.8794);-webkit-text-stroke:0.15px #333;">Expt2</div>
<div class="t" style="left:1161.10px;top:713.97px;font-size:18.90px;line-height:18.90px;font-weight:normal;color:#333;font-family:'Liberation Sans', sans-serif;transform:scaleX(0.8794);-webkit-text-stroke:0.15px #333;">Expt2</div>
<div class="t" style="left:1232.70px;top:713.97px;font-size:18.90px;line-height:18.90px;font-weight:normal;color:#333;font-family:'Liberation Sans', sans-serif;transform:scaleX(0.8794);-webkit-text-stroke:0.15px #333;">Expt2</div>
<div class="t" style="left:1304.30px;top:713.97px;font-size:18.90px;line-height:18.90px;font-weight:normal;color:#333;font-family:'Liberation Sans', sans-serif;transform:scaleX(0.8794);-webkit-text-stroke:0.15px #333;">Expt2</div>
<div class="t" style="left:1375.90px;top:713.97px;font-size:18.90px;line-height:18.90px;font-weight:normal;color:#333;font-family:'Liberation Sans', sans-serif;transform:scaleX(0.8794);-webkit-text-stroke:0.15px #333;">Expt2</div>
<div class="t" style="left:1447.50px;top:713.97px;font-size:18.90px;line-height:18.90px;font-weight:normal;color:#333;font-family:'Liberation Sans', sans-serif;transform:scaleX(0.8794);-webkit-text-stroke:0.15px #333;">Expt2</div>
<div class="t" style="left:1519.10px;top:713.97px;font-size:18.90px;line-height:18.90px;font-weight:normal;color:#333;font-family:'Liberation Sans', sans-serif;transform:scaleX(0.8794);-webkit-text-stroke:0.15px #333;">Expt2</div>
<div class="t" style="left:1601.70px;top:713.97px;font-size:18.90px;line-height:18.90px;font-weight:normal;color:#333;font-family:'Liberation Sans', sans-serif;transform:scaleX(0.8794);-webkit-text-stroke:0.15px #333;">Expt2</div>
<div class="t" style="left:1684.30px;top:713.97px;font-size:18.90px;line-height:18.90px;font-weight:normal;color:#333;font-family:'Liberation Sans', sans-serif;transform:scaleX(0.8794);-webkit-text-stroke:0.15px #333;">Expt2</div>
<div class="t" style="left:1766.90px;top:713.97px;font-size:18.90px;line-height:18.90px;font-weight:normal;color:#333;font-family:'Liberation Sans', sans-serif;transform:scaleX(0.8794);-webkit-text-stroke:0.15px #333;">Expt2</div>
<div class="t" style="left:1849.50px;top:713.97px;font-size:18.90px;line-height:18.90px;font-weight:normal;color:#333;font-family:'Liberation Sans', sans-serif;transform:scaleX(0.8794);-webkit-text-stroke:0.15px #333;">Expt2</div>
<div class="t" style="left:1932.10px;top:713.97px;font-size:18.90px;line-height:18.90px;font-weight:normal;color:#333;font-family:'Liberation Sans', sans-serif;transform:scaleX(0.8794);-webkit-text-stroke:0.15px #333;">Expt2</div>
<div class="t" style="left:2014.70px;top:713.97px;font-size:18.90px;line-height:18.90px;font-weight:normal;color:#333;font-family:'Liberation Sans', sans-serif;transform:scaleX(0.8794);-webkit-text-stroke:0.15px #333;">Expt2</div>
<div class="t" style="left:2097.30px;top:713.97px;font-size:18.90px;line-height:18.90px;font-weight:normal;color:#333;font-family:'Liberation Sans', sans-serif;transform:scaleX(0.8794);-webkit-text-stroke:0.15px #333;">Expt2</div>
<div class="t" style="left:2179.90px;top:713.97px;font-size:18.90px;line-height:18.90px;font-weight:normal;color:#333;font-family:'Liberation Sans', sans-serif;transform:scaleX(0.8794);-webkit-text-stroke:0.15px #333;">Expt2</div>
<div class="t" style="left:2262.50px;top:713.97px;font-size:18.90px;line-height:18.90px;font-weight:normal;color:#333;font-family:'Liberation Sans', sans-serif;transform:scaleX(0.8794);-webkit-text-stroke:0.15px #333;">Expt2</div>
<div class="t" style="left:2345.10px;top:713.97px;font-size:18.90px;line-height:18.90px;font-weight:normal;color:#333;font-family:'Liberation Sans', sans-serif;transform:scaleX(0.8794);-webkit-text-stroke:0.15px #333;">Expt2</div>
<div class="r" style="left:815.00px;top:745.00px;width:47.00px;height:47.00px;background:#f8f8f8;"></div>
<div class="r" style="left:862.00px;top:745.00px;width:358.00px;height:47.00px;background:#5f9ea0;"></div>
<div class="r" style="left:862.00px;top:745.00px;width:358.00px;height:1.00px;background:rgba(255,255,255,0.32);"></div>
<div class="r" style="left:1220.00px;top:745.00px;width:1195.00px;height:47.00px;background:#fffafa;"></div>
<div class="r" style="left:1220.00px;top:745.00px;width:1195.00px;height:1.00px;background:#ededed;"></div>
<div class="r" style="left:815.00px;top:745.00px;width:47.00px;height:1.00px;background:#efefef;"></div>
<div class="t" style="left:828.20px;top:760.60px;font-size:18.90px;line-height:18.90px;font-weight:normal;color:#333;font-family:'Liberation Sans', sans-serif;-webkit-text-stroke:0.15px #333;">6</div>
<div class="t" style="left:874.70px;top:760.60px;font-size:18.90px;line-height:18.90px;font-weight:normal;color:#333;font-family:'Liberation Sans', sans-serif;transform:scaleX(0.8794);-webkit-text-stroke:0.15px #333;">Expt2</div>
<div class="t" style="left:946.30px;top:760.60px;font-size:18.90px;line-height:18.90px;font-weight:normal;color:#333;font-family:'Liberation Sans', sans-serif;transform:scaleX(0.8794);-webkit-text-stroke:0.15px #333;">Expt2</div>
<div class="t" style="left:1017.90px;top:760.60px;font-size:18.90px;line-height:18.90px;font-weight:normal;color:#333;font-family:'Liberation Sans', sans-serif;transform:scaleX(0.8794);-webkit-text-stroke:0.15px #333;">Expt2</div>
<div class="t" style="left:1089.50px;top:760.60px;font-size:18.90px;line-height:18.90px;font-weight:normal;color:#333;font-family:'Liberation Sans', sans-serif;transform:scaleX(0.8794);-webkit-text-stroke:0.15px #333;">Expt2</div>
<div class="t" style="left:1161.10px;top:760.60px;font-size:18.90px;line-height:18.90px;font-weight:normal;color:#333;font-family:'Liberation Sans', sans-serif;transform:scaleX(0.8794);-webkit-text-stroke:0.15px #333;">Expt2</div>
<div class="t" style="left:1232.70px;top:760.60px;font-size:18.90px;line-height:18.90px;font-weight:normal;color:#333;font-family:'Liberation Sans', sans-serif;transform:scaleX(0.8794);-webkit-text-stroke:0.15px #333;">Expt1</div>
<div class="t" style="left:1304.30px;top:760.60px;font-size:18.90px;line-height:18.90px;font-weight:normal;color:#333;font-family:'Liberation Sans', sans-serif;transform:scaleX(0.8794);-webkit-text-stroke:0.15px #333;">Expt1</div>
<div class="t" style="left:1375.90px;top:760.60px;font-size:18.90px;line-height:18.90px;font-weight:normal;color:#333;font-family:'Liberation Sans', sans-serif;transform:scaleX(0.8794);-webkit-text-stroke:0.15px #333;">Expt1</div>
<div class="t" style="left:1447.50px;top:760.60px;font-size:18.90px;line-height:18.90px;font-weight:normal;color:#333;font-family:'Liberation Sans', sans-serif;transform:scaleX(0.8794);-webkit-text-stroke:0.15px #333;">Expt1</div>
<div class="t" style="left:1519.10px;top:760.60px;font-size:18.90px;line-height:18.90px;font-weight:normal;color:#333;font-family:'Liberation Sans', sans-serif;transform:scaleX(0.8794);-webkit-text-stroke:0.15px #333;">Expt1</div>
<div class="t" style="left:1601.70px;top:760.60px;font-size:18.90px;line-height:18.90px;font-weight:normal;color:#333;font-family:'Liberation Sans', sans-serif;transform:scaleX(0.8794);-webkit-text-stroke:0.15px #333;">Expt1</div>
<div class="t" style="left:1684.30px;top:760.60px;font-size:18.90px;line-height:18.90px;font-weight:normal;color:#333;font-family:'Liberation Sans', sans-serif;transform:scaleX(0.8794);-webkit-text-stroke:0.15px #333;">Expt1</div>
<div class="t" style="left:1766.90px;top:760.60px;font-size:18.90px;line-height:18.90px;font-weight:normal;color:#333;font-family:'Liberation Sans', sans-serif;transform:scaleX(0.8794);-webkit-text-stroke:0.15px #333;">Expt1</div>
<div class="t" style="left:1849.50px;top:760.60px;font-size:18.90px;line-height:18.90px;font-weight:normal;color:#333;font-family:'Liberation Sans', sans-serif;transform:scaleX(0.8794);-webkit-text-stroke:0.15px #333;">Expt1</div>
<div class="t" style="left:1932.10px;top:760.60px;font-size:18.90px;line-height:18.90px;font-weight:normal;color:#333;font-family:'Liberation Sans', sans-serif;transform:scaleX(0.8794);-webkit-text-stroke:0.15px #333;">Expt1</div>
<div class="t" style="left:2014.70px;top:760.60px;font-size:18.90px;line-height:18.90px;font-weight:normal;color:#333;font-family:'Liberation Sans', sans-serif;transform:scaleX(0.8794);-webkit-text-stroke:0.15px #333;">Expt1</div>
<div class="t" style="left:2097.30px;top:760.60px;font-size:18.90px;line-height:18.90px;font-weight:normal;color:#333;font-family:'Liberation Sans', sans-serif;transform:scaleX(0.8794);-webkit-text-stroke:0.15px #333;">Expt1</div>
<div class="t" style="left:2179.90px;top:760.60px;font-size:18.90px;line-height:18.90px;font-weight:normal;color:#333;font-family:'Liberation Sans', sans-serif;transform:scaleX(0.8794);-webkit-text-stroke:0.15px #333;">Expt1</div>
<div class="t" style="left:2262.50px;top:760.60px;font-size:18.90px;line-height:18.90px;font-weight:normal;color:#333;font-family:'Liberation Sans', sans-serif;transform:scaleX(0.8794);-webkit-text-stroke:0.15px #333;">Expt1</div>
<div class="t" style="left:2345.10px;top:760.60px;font-size:18.90px;line-height:18.90px;font-weight:normal;color:#333;font-family:'Liberation Sans', sans-serif;transform:scaleX(0.8794);-webkit-text-stroke:0.15px #333;">Expt1</div>
<div class="r" style="left:815.00px;top:792.00px;width:47.00px;height:46.00px;background:#ffffff;"></div>
<div class="r" style="left:862.00px;top:792.00px;width:1553.00px;height:46.00px;background:#fffafa;"></div>
<div class="r" style="left:862.00px;top:792.00px;width:1553.00px;height:1.00px;background:#ededed;"></div>
<div class="r" style="left:815.00px;top:792.00px;width:47.00px;height:1.00px;background:#efefef;"></div>
<div class="t" style="left:828.20px;top:807.23px;font-size:18.90px;line-height:18.90px;font-weight:normal;color:#333;font-family:'Liberation Sans', sans-serif;-webkit-text-stroke:0.15px #333;">5</div>
<div class="t" style="left:874.70px;top:807.23px;font-size:18.90px;line-height:18.90px;font-weight:normal;color:#333;font-family:'Liberation Sans', sans-serif;transform:scaleX(0.8794);-webkit-text-stroke:0.15px #333;">Expt1</div>
<div class="t" style="left:946.30px;top:807.23px;font-size:18.90px;line-height:18.90px;font-weight:normal;color:#333;font-family:'Liberation Sans', sans-serif;transform:scaleX(0.8794);-webkit-text-stroke:0.15px #333;">Expt1</div>
<div class="t" style="left:1017.90px;top:807.23px;font-size:18.90px;line-height:18.90px;font-weight:normal;color:#333;font-family:'Liberation Sans', sans-serif;transform:scaleX(0.8794);-webkit-text-stroke:0.15px #333;">Expt1</div>
<div class="t" style="left:1089.50px;top:807.23px;font-size:18.90px;line-height:18.90px;font-weight:normal;color:#333;font-family:'Liberation Sans', sans-serif;transform:scaleX(0.8794);-webkit-text-stroke:0.15px #333;">Expt1</div>
<div class="t" style="left:1161.10px;top:807.23px;font-size:18.90px;line-height:18.90px;font-weight:normal;color:#333;font-family:'Liberation Sans', sans-serif;transform:scaleX(0.8794);-webkit-text-stroke:0.15px #333;">Expt1</div>
<div class="t" style="left:1232.70px;top:807.23px;font-size:18.90px;line-height:18.90px;font-weight:normal;color:#333;font-family:'Liberation Sans', sans-serif;transform:scaleX(0.8794);-webkit-text-stroke:0.15px #333;">Expt1</div>
<div class="t" style="left:1304.30px;top:807.23px;font-size:18.90px;line-height:18.90px;font-weight:normal;color:#333;font-family:'Liberation Sans', sans-serif;transform:scaleX(0.8794);-webkit-text-stroke:0.15px #333;">Expt1</div>
<div class="t" style="left:1375.90px;top:807.23px;font-size:18.90px;line-height:18.90px;font-weight:normal;color:#333;font-family:'Liberation Sans', sans-serif;transform:scaleX(0.8794);-webkit-text-stroke:0.15px #333;">Expt1</div>
<div class="t" style="left:1447.50px;top:807.23px;font-size:18.90px;line-height:18.90px;font-weight:normal;color:#333;font-family:'Liberation Sans', sans-serif;transform:scaleX(0.8794);-webkit-text-stroke:0.15px #333;">Expt1</div>
<div class="t" style="left:1519.10px;top:807.23px;font-size:18.90px;line-height:18.90px;font-weight:normal;color:#333;font-family:'Liberation Sans', sans-serif;transform:scaleX(0.8794);-webkit-text-stroke:0.15px #333;">Expt1</div>
<div class="t" style="left:1601.70px;top:807.23px;font-size:18.90px;line-height:18.90px;font-weight:normal;color:#333;font-family:'Liberation Sans', sans-serif;transform:scaleX(0.8794);-webkit-text-stroke:0.15px #333;">Expt1</div>
<div class="t" style="left:1684.30px;top:807.23px;font-size:18.90px;line-height:18.90px;font-weight:normal;color:#333;font-family:'Liberation Sans', sans-serif;transform:scaleX(0.8794);-webkit-text-stroke:0.15px #333;">Expt1</div>
<div class="t" style="left:1766.90px;top:807.23px;font-size:18.90px;line-height:18.90px;font-weight:normal;color:#333;font-family:'Liberation Sans', sans-serif;transform:scaleX(0.8794);-webkit-text-stroke:0.15px #333;">Expt1</div>
<div class="t" style="left:1849.50px;top:807.23px;font-size:18.90px;line-height:18.90px;font-weight:normal;color:#333;font-family:'Liberation Sans', sans-serif;transform:scaleX(0.8794);-webkit-text-stroke:0.15px #333;">Expt1</div>
<div class="t" style="left:1932.10px;top:807.23px;font-size:18.90px;line-height:18.90px;font-weight:normal;color:#333;font-family:'Liberation Sans', sans-serif;transform:scaleX(0.8794);-webkit-text-stroke:0.15px #333;">Expt1</div>
<div class="t" style="left:2014.70px;top:807.23px;font-size:18.90px;line-height:18.90px;font-weight:normal;color:#333;font-family:'Liberation Sans', sans-serif;transform:scaleX(0.8794);-webkit-text-stroke:0.15px #333;">Expt1</div>
<div class="t" style="left:2097.30px;top:807.23px;font-size:18.90px;line-height:18.90px;font-weight:normal;color:#333;font-family:'Liberation Sans', sans-serif;transform:scaleX(0.8794);-webkit-text-stroke:0.15px #333;">Expt1</div>
<div class="t" style="left:2179.90px;top:807.23px;font-size:18.90px;line-height:18.90px;font-weight:normal;color:#333;font-family:'Liberation Sans', sans-serif;transform:scaleX(0.8794);-webkit-text-stroke:0.15px #333;">Expt1</div>
<div class="t" style="left:2262.50px;top:807.23px;font-size:18.90px;line-height:18.90px;font-weight:normal;color:#333;font-family:'Liberation Sans', sans-serif;transform:scaleX(0.8794);-webkit-text-stroke:0.15px #333;">Expt1</div>
<div class="t" style="left:2345.10px;top:807.23px;font-size:18.90px;line-height:18.90px;font-weight:normal;color:#333;font-family:'Liberation Sans', sans-serif;transform:scaleX(0.8794);-webkit-text-stroke:0.15px #333;">Expt1</div>
<div class="r" style="left:815.00px;top:838.00px;width:47.00px;height:47.00px;background:#f8f8f8;"></div>
<div class="r" style="left:862.00px;top:838.00px;width:1553.00px;height:47.00px;background:#fffafa;"></div>
<div class="r" style="left:862.00px;top:838.00px;width:1553.00px;height:1.00px;background:#ededed;"></div>
<div class="r" style="left:815.00px;top:838.00px;width:47.00px;height:1.00px;background:#efefef;"></div>
<div class="t" style="left:828.20px;top:853.86px;font-size:18.90px;line-height:18.90px;font-weight:normal;color:#333;font-family:'Liberation Sans', sans-serif;-webkit-text-stroke:0.15px #333;">4</div>
<div class="t" style="left:874.70px;top:853.86px;font-size:18.90px;line-height:18.90px;font-weight:normal;color:#333;font-family:'Liberation Sans', sans-serif;transform:scaleX(0.8794);-webkit-text-stroke:0.15px #333;">Expt1</div>
<div class="t" style="left:946.30px;top:853.86px;font-size:18.90px;line-height:18.90px;font-weight:normal;color:#333;font-family:'Liberation Sans', sans-serif;transform:scaleX(0.8794);-webkit-text-stroke:0.15px #333;">Expt1</div>
<div class="t" style="left:1017.90px;top:853.86px;font-size:18.90px;line-height:18.90px;font-weight:normal;color:#333;font-family:'Liberation Sans', sans-serif;transform:scaleX(0.8794);-webkit-text-stroke:0.15px #333;">Expt1</div>
<div class="t" style="left:1089.50px;top:853.86px;font-size:18.90px;line-height:18.90px;font-weight:normal;color:#333;font-family:'Liberation Sans', sans-serif;transform:scaleX(0.8794);-webkit-text-stroke:0.15px #333;">Expt1</div>
<div class="t" style="left:1161.10px;top:853.86px;font-size:18.90px;line-height:18.90px;font-weight:normal;color:#333;font-family:'Liberation Sans', sans-serif;transform:scaleX(0.8794);-webkit-text-stroke:0.15px #333;">Expt1</div>
<div class="t" style="left:1232.70px;top:853.86px;font-size:18.90px;line-height:18.90px;font-weight:normal;color:#333;font-family:'Liberation Sans', sans-serif;transform:scaleX(0.8794);-webkit-text-stroke:0.15px #333;">Expt1</div>
<div class="t" style="left:1304.30px;top:853.86px;font-size:18.90px;line-height:18.90px;font-weight:normal;color:#333;font-family:'Liberation Sans', sans-serif;transform:scaleX(0.8794);-webkit-text-stroke:0.15px #333;">Expt1</div>
<div class="t" style="left:1375.90px;top:853.86px;font-size:18.90px;line-height:18.90px;font-weight:normal;color:#333;font-family:'Liberation Sans', sans-serif;transform:scaleX(0.8794);-webkit-text-stroke:0.15px #333;">Expt1</div>
<div class="t" style="left:1447.50px;top:853.86px;font-size:18.90px;line-height:18.90px;font-weight:normal;color:#333;font-family:'Liberation Sans', sans-serif;transform:scaleX(0.8794);-webkit-text-stroke:0.15px #333;">Expt1</div>
<div class="t" style="left:1519.10px;top:853.86px;font-size:18.90px;line-height:18.90px;font-weight:normal;color:#333;font-family:'Liberation Sans', sans-serif;transform:scaleX(0.8794);-webkit-text-stroke:0.15px #333;">Expt1</div>
<div class="t" style="left:1601.70px;top:853.86px;font-size:18.90px;line-height:18.90px;font-weight:normal;color:#333;font-family:'Liberation Sans', sans-serif;transform:scaleX(0.8794);-webkit-text-stroke:0.15px #333;">Expt1</div>
<div class="t" style="left:1684.30px;top:853.86px;font-size:18.90px;line-height:18.90px;font-weight:normal;color:#333;font-family:'Liberation Sans', sans-serif;transform:scaleX(0.8794);-webkit-text-stroke:0.15px #333;">Expt1</div>
<div class="t" style="left:1766.90px;top:853.86px;font-size:18.90px;line-height:18.90px;font-weight:normal;color:#333;font-family:'Liberation Sans', sans-serif;transform:scaleX(0.8794);-webkit-text-stroke:0.15px #333;">Expt1</div>
<div class="t" style="left:1849.50px;top:853.86px;font-size:18.90px;line-height:18.90px;font-weight:normal;color:#333;font-family:'Liberation Sans', sans-serif;transform:scaleX(0.8794);-webkit-text-stroke:0.15px #333;">Expt1</div>
<div class="t" style="left:1932.10px;top:853.86px;font-size:18.90px;line-height:18.90px;font-weight:normal;color:#333;font-family:'Liberation Sans', sans-serif;transform:scaleX(0.8794);-webkit-text-stroke:0.15px #333;">Expt1</div>
<div class="t" style="left:2014.70px;top:853.86px;font-size:18.90px;line-height:18.90px;font-weight:normal;color:#333;font-family:'Liberation Sans', sans-serif;transform:scaleX(0.8794);-webkit-text-stroke:0.15px #333;">Expt1</div>
<div class="t" style="left:2097.30px;top:853.86px;font-size:18.90px;line-height:18.90px;font-weight:normal;color:#333;font-family:'Liberation Sans', sans-serif;transform:scaleX(0.8794);-webkit-text-stroke:0.15px #333;">Expt1</div>
<div class="t" style="left:2179.90px;top:853.86px;font-size:18.90px;line-height:18.90px;font-weight:normal;color:#333;font-family:'Liberation Sans', sans-serif;transform:scaleX(0.8794);-webkit-text-stroke:0.15px #333;">Expt1</div>
<div class="t" style="left:2262.50px;top:853.86px;font-size:18.90px;line-height:18.90px;font-weight:normal;color:#333;font-family:'Liberation Sans', sans-serif;transform:scaleX(0.8794);-webkit-text-stroke:0.15px #333;">Expt1</div>
<div class="t" style="left:2345.10px;top:853.86px;font-size:18.90px;line-height:18.90px;font-weight:normal;color:#333;font-family:'Liberation Sans', sans-serif;transform:scaleX(0.8794);-webkit-text-stroke:0.15px #333;">Expt1</div>
<div class="r" style="left:815.00px;top:885.00px;width:47.00px;height:46.00px;background:#ffffff;"></div>
<div class="r" style="left:862.00px;top:885.00px;width:1553.00px;height:46.00px;background:#fffafa;"></div>
<div class="r" style="left:862.00px;top:885.00px;width:1553.00px;height:1.00px;background:#ededed;"></div>
<div class="r" style="left:815.00px;top:885.00px;width:47.00px;height:1.00px;background:#efefef;"></div>
<div class="t" style="left:828.20px;top:900.49px;font-size:18.90px;line-height:18.90px;font-weight:normal;color:#333;font-family:'Liberation Sans', sans-serif;-webkit-text-stroke:0.15px #333;">3</div>
<div class="t" style="left:874.70px;top:900.49px;font-size:18.90px;line-height:18.90px;font-weight:normal;color:#333;font-family:'Liberation Sans', sans-serif;transform:scaleX(0.8794);-webkit-text-stroke:0.15px #333;">Expt1</div>
<div class="t" style="left:946.30px;top:900.49px;font-size:18.90px;line-height:18.90px;font-weight:normal;color:#333;font-family:'Liberation Sans', sans-serif;transform:scaleX(0.8794);-webkit-text-stroke:0.15px #333;">Expt1</div>
<div class="t" style="left:1017.90px;top:900.49px;font-size:18.90px;line-height:18.90px;font-weight:normal;color:#333;font-family:'Liberation Sans', sans-serif;transform:scaleX(0.8794);-webkit-text-stroke:0.15px #333;">Expt1</div>
<div class="t" style="left:1089.50px;top:900.49px;font-size:18.90px;line-height:18.90px;font-weight:normal;color:#333;font-family:'Liberation Sans', sans-serif;transform:scaleX(0.8794);-webkit-text-stroke:0.15px #333;">Expt1</div>
<div class="t" style="left:1161.10px;top:900.49px;font-size:18.90px;line-height:18.90px;font-weight:normal;color:#333;font-family:'Liberation Sans', sans-serif;transform:scaleX(0.8794);-webkit-text-stroke:0.15px #333;">Expt1</div>
<div class="t" style="left:1232.70px;top:900.49px;font-size:18.90px;line-height:18.90px;font-weight:normal;color:#333;font-family:'Liberation Sans', sans-serif;transform:scaleX(0.8794);-webkit-text-stroke:0.15px #333;">Expt1</div>
<div class="t" style="left:1304.30px;top:900.49px;font-size:18.90px;line-height:18.90px;font-weight:normal;color:#333;font-family:'Liberation Sans', sans-serif;transform:scaleX(0.8794);-webkit-text-stroke:0.15px #333;">Expt1</div>
<div class="t" style="left:1375.90px;top:900.49px;font-size:18.90px;line-height:18.90px;font-weight:normal;color:#333;font-family:'Liberation Sans', sans-serif;transform:scaleX(0.8794);-webkit-text-stroke:0.15px #333;">Expt1</div>
<div class="t" style="left:1447.50px;top:900.49px;font-size:18.90px;line-height:18.90px;font-weight:normal;color:#333;font-family:'Liberation Sans', sans-serif;transform:scaleX(0.8794);-webkit-text-stroke:0.15px #333;">Expt1</div>
<div class="t" style="left:1519.10px;top:900.49px;font-size:18.90px;line-height:18.90px;font-weight:normal;color:#333;font-family:'Liberation Sans', sans-serif;transform:scaleX(0.8794);-webkit-text-stroke:0.15px #333;">Expt1</div>
<div class="t" style="left:1601.70px;top:900.49px;font-size:18.90px;line-height:18.90px;font-weight:normal;color:#333;font-family:'Liberation Sans', sans-serif;transform:scaleX(0.8794);-webkit-text-stroke:0.15px #333;">Expt1</div>
<div class="t" style="left:1684.30px;top:900.49px;font-size:18.90px;line-height:18.90px;font-weight:normal;color:#333;font-family:'Liberation Sans', sans-serif;transform:scaleX(0.8794);-webkit-text-stroke:0.15px #333;">Expt1</div>
<div class="t" style="left:1766.90px;top:900.49px;font-size:18.90px;line-height:18.90px;font-weight:normal;color:#333;font-family:'Liberation Sans', sans-serif;transform:scaleX(0.8794);-webkit-text-stroke:0.15px #333;">Expt1</div>
<div class="t" style="left:1849.50px;top:900.49px;font-size:18.90px;line-height:18.90px;font-weight:normal;color:#333;font-family:'Liberation Sans', sans-serif;transform:scaleX(0.8794);-webkit-text-stroke:0.15px #333;">Expt1</div>
<div class="t" style="left:1932.10px;top:900.49px;font-size:18.90px;line-height:18.90px;font-weight:normal;color:#333;font-family:'Liberation Sans', sans-serif;transform:scaleX(0.8794);-webkit-text-stroke:0.15px #333;">Expt1</div>
<div class="t" style="left:2014.70px;top:900.49px;font-size:18.90px;line-height:18.90px;font-weight:normal;color:#333;font-family:'Liberation Sans', sans-serif;transform:scaleX(0.8794);-webkit-text-stroke:0.15px #333;">Expt1</div>
<div class="t" style="left:2097.30px;top:900.49px;font-size:18.90px;line-height:18.90px;font-weight:normal;color:#333;font-family:'Liberation Sans', sans-serif;transform:scaleX(0.8794);-webkit-text-stroke:0.15px #333;">Expt1</div>
<div class="t" style="left:2179.90px;top:900.49px;font-size:18.90px;line-height:18.90px;font-weight:normal;color:#333;font-family:'Liberation Sans', sans-serif;transform:scaleX(0.8794);-webkit-text-stroke:0.15px #333;">Expt1</div>
<div class="t" style="left:2262.50px;top:900.49px;font-size:18.90px;line-height:18.90px;font-weight:normal;color:#333;font-family:'Liberation Sans', sans-serif;transform:scaleX(0.8794);-webkit-text-stroke:0.15px #333;">Expt1</div>
<div class="t" style="left:2345.10px;top:900.49px;font-size:18.90px;line-height:18.90px;font-weight:normal;color:#333;font-family:'Liberation Sans', sans-serif;transform:scaleX(0.8794);-webkit-text-stroke:0.15px #333;">Expt1</div>
<div class="r" style="left:815.00px;top:931.00px;width:47.00px;height:47.00px;background:#f8f8f8;"></div>
<div class="r" style="left:862.00px;top:931.00px;width:1553.00px;height:47.00px;background:#fffafa;"></div>
<div class="r" style="left:862.00px;top:931.00px;width:1553.00px;height:1.00px;background:#ededed;"></div>
<div class="r" style="left:815.00px;top:931.00px;width:47.00px;height:1.00px;background:#efefef;"></div>
<div class="t" style="left:828.20px;top:947.12px;font-size:18.90px;line-height:18.90px;font-weight:normal;color:#333;font-family:'Liberation Sans', sans-serif;-webkit-text-stroke:0.15px #333;">2</div>
<div class="t" style="left:874.70px;top:947.12px;font-size:18.90px;line-height:18.90px;font-weight:normal;color:#333;font-family:'Liberation Sans', sans-serif;transform:scaleX(0.8794);-webkit-text-stroke:0.15px #333;">Expt1</div>
<div class="t" style="left:946.30px;top:947.12px;font-size:18.90px;line-height:18.90px;font-weight:normal;color:#333;font-family:'Liberation Sans', sans-serif;transform:scaleX(0.8794);-webkit-text-stroke:0.15px #333;">Expt1</div>
<div class="t" style="left:1017.90px;top:947.12px;font-size:18.90px;line-height:18.90px;font-weight:normal;color:#333;font-family:'Liberation Sans', sans-serif;transform:scaleX(0.8794);-webkit-text-stroke:0.15px #333;">Expt1</div>
<div class="t" style="left:1089.50px;top:947.12px;font-size:18.90px;line-height:18.90px;font-weight:normal;color:#333;font-family:'Liberation Sans', sans-serif;transform:scaleX(0.8794);-webkit-text-stroke:0.15px #333;">Expt1</div>
<div class="t" style="left:1161.10px;top:947.12px;font-size:18.90px;line-height:18.90px;font-weight:normal;color:#333;font-family:'Liberation Sans', sans-serif;transform:scaleX(0.8794);-webkit-text-stroke:0.15px #333;">Expt1</div>
<div class="t" style="left:1232.70px;top:947.12px;font-size:18.90px;line-height:18.90px;font-weight:normal;color:#333;font-family:'Liberation Sans', sans-serif;transform:scaleX(0.8794);-webkit-text-stroke:0.15px #333;">Expt1</div>
<div class="t" style="left:1304.30px;top:947.12px;font-size:18.90px;line-height:18.90px;font-weight:normal;color:#333;font-family:'Liberation Sans', sans-serif;transform:scaleX(0.8794);-webkit-text-stroke:0.15px #333;">Expt1</div>
<div class="t" style="left:1375.90px;top:947.12px;font-size:18.90px;line-height:18.90px;font-weight:normal;color:#333;font-family:'Liberation Sans', sans-serif;transform:scaleX(0.8794);-webkit-text-stroke:0.15px #333;">Expt1</div>
<div class="t" style="left:1447.50px;top:947.12px;font-size:18.90px;line-height:18.90px;font-weight:normal;color:#333;font-family:'Liberation Sans', sans-serif;transform:scaleX(0.8794);-webkit-text-stroke:0.15px #333;">Expt1</div>
<div class="t" style="left:1519.10px;top:947.12px;font-size:18.90px;line-height:18.90px;font-weight:normal;color:#333;font-family:'Liberation Sans', sans-serif;transform:scaleX(0.8794);-webkit-text-stroke:0.15px #333;">Expt1</div>
<div class="t" style="left:1601.70px;top:947.12px;font-size:18.90px;line-height:18.90px;font-weight:normal;color:#333;font-family:'Liberation Sans', sans-serif;transform:scaleX(0.8794);-webkit-text-stroke:0.15px #333;">Expt1</div>
<div class="t" style="left:1684.30px;top:947.12px;font-size:18.90px;line-height:18.90px;font-weight:normal;color:#333;font-family:'Liberation Sans', sans-serif;transform:scaleX(0.8794);-webkit-text-stroke:0.15px #333;">Expt1</div>
<div class="t" style="left:1766.90px;top:947.12px;font-size:18.90px;line-height:18.90px;font-weight:normal;color:#333;font-family:'Liberation Sans', sans-serif;transform:scaleX(0.8794);-webkit-text-stroke:0.15px #333;">Expt1</div>
<div class="t" style="left:1849.50px;top:947.12px;font-size:18.90px;line-height:18.90px;font-weight:normal;color:#333;font-family:'Liberation Sans', sans-serif;transform:scaleX(0.8794);-webkit-text-stroke:0.15px #333;">Expt1</div>
<div class="t" style="left:1932.10px;top:947.12px;font-size:18.90px;line-height:18.90px;font-weight:normal;color:#333;font-family:'Liberation Sans', sans-serif;transform:scaleX(0.8794);-webkit-text-stroke:0.15px #333;">Expt1</div>
<div class="t" style="left:2014.70px;top:947.12px;font-size:18.90px;line-height:18.90px;font-weight:normal;color:#333;font-family:'Liberation Sans', sans-serif;transform:scaleX(0.8794);-webkit-text-stroke:0.15px #333;">Expt1</div>
<div class="t" style="left:2097.30px;top:947.12px;font-size:18.90px;line-height:18.90px;font-weight:normal;color:#333;font-family:'Liberation Sans', sans-serif;transform:scaleX(0.8794);-webkit-text-stroke:0.15px #333;">Expt1</div>
<div class="t" style="left:2179.90px;top:947.12px;font-size:18.90px;line-height:18.90px;font-weight:normal;color:#333;font-family:'Liberation Sans', sans-serif;transform:scaleX(0.8794);-webkit-text-stroke:0.15px #333;">Expt1</div>
<div class="t" style="left:2262.50px;top:947.12px;font-size:18.90px;line-height:18.90px;font-weight:normal;color:#333;font-family:'Liberation Sans', sans-serif;transform:scaleX(0.8794);-webkit-text-stroke:0.15px #333;">Expt1</div>
<div class="t" style="left:2345.10px;top:947.12px;font-size:18.90px;line-height:18.90px;font-weight:normal;color:#333;font-family:'Liberation Sans', sans-serif;transform:scaleX(0.8794);-webkit-text-stroke:0.15px #333;">Expt1</div>
<div class="r" style="left:815.00px;top:978.00px;width:47.00px;height:46.00px;background:#ffffff;"></div>
<div class="r" style="left:862.00px;top:978.00px;width:1553.00px;height:46.00px;background:#fffafa;"></div>
<div class="r" style="left:862.00px;top:978.00px;width:1553.00px;height:1.00px;background:#ededed;"></div>
<div class="r" style="left:815.00px;top:978.00px;width:47.00px;height:1.00px;background:#efefef;"></div>
<div class="t" style="left:828.20px;top:993.75px;font-size:18.90px;line-height:18.90px;font-weight:normal;color:#333;font-family:'Liberation Sans', sans-serif;-webkit-text-stroke:0.15px #333;">1</div>
<div class="t" style="left:874.70px;top:993.75px;font-size:18.90px;line-height:18.90px;font-weight:normal;color:#333;font-family:'Liberation Sans', sans-serif;transform:scaleX(0.8794);-webkit-text-stroke:0.15px #333;">Expt1</div>
<div class="t" style="left:946.30px;top:993.75px;font-size:18.90px;line-height:18.90px;font-weight:normal;color:#333;font-family:'Liberation Sans', sans-serif;transform:scaleX(0.8794);-webkit-text-stroke:0.15px #333;">Expt1</div>
<div class="t" style="left:1017.90px;top:993.75px;font-size:18.90px;line-height:18.90px;font-weight:normal;color:#333;font-family:'Liberation Sans', sans-serif;transform:scaleX(0.8794);-webkit-text-stroke:0.15px #333;">Expt1</div>
<div class="t" style="left:1089.50px;top:993.75px;font-size:18.90px;line-height:18.90px;font-weight:normal;color:#333;font-family:'Liberation Sans', sans-serif;transform:scaleX(0.8794);-webkit-text-stroke:0.15px #333;">Expt1</div>
<div class="t" style="left:1161.10px;top:993.75px;font-size:18.90px;line-height:18.90px;font-weight:normal;color:#333;font-family:'Liberation Sans', sans-serif;transform:scaleX(0.8794);-webkit-text-stroke:0.15px #333;">Expt1</div>
<div class="t" style="left:1232.70px;top:993.75px;font-size:18.90px;line-height:18.90px;font-weight:normal;color:#333;font-family:'Liberation Sans', sans-serif;transform:scaleX(0.8794);-webkit-text-stroke:0.15px #333;">Expt1</div>
<div class="t" style="left:1304.30px;top:993.75px;font-size:18.90px;line-height:18.90px;font-weight:normal;color:#333;font-family:'Liberation Sans', sans-serif;transform:scaleX(0.8794);-webkit-text-stroke:0.15px #333;">Expt1</div>
<div class="t" style="left:1375.90px;top:993.75px;font-size:18.90px;line-height:18.90px;font-weight:normal;color:#333;font-family:'Liberation Sans', sans-serif;transform:scaleX(0.8794);-webkit-text-stroke:0.15px #333;">Expt1</div>
<div class="t" style="left:1447.50px;top:993.75px;font-size:18.90px;line-height:18.90px;font-weight:normal;color:#333;font-family:'Liberation Sans', sans-serif;transform:scaleX(0.8794);-webkit-text-stroke:0.15px #333;">Expt1</div>
<div class="t" style="left:1519.10px;top:993.75px;font-size:18.90px;line-height:18.90px;font-weight:normal;color:#333;font-family:'Liberation Sans', sans-serif;transform:scaleX(0.8794);-webkit-text-stroke:0.15px #333;">Expt1</div>
<div class="t" style="left:1601.70px;top:993.75px;font-size:18.90px;line-height:18.90px;font-weight:normal;color:#333;font-family:'Liberation Sans', sans-serif;transform:scaleX(0.8794);-webkit-text-stroke:0.15px #333;">Expt1</div>
<div class="t" style="left:1684.30px;top:993.75px;font-size:18.90px;line-height:18.90px;font-weight:normal;color:#333;font-family:'Liberation Sans', sans-serif;transform:scaleX(0.8794);-webkit-text-stroke:0.15px #333;">Expt1</div>
<div class="t" style="left:1766.90px;top:993.75px;font-size:18.90px;line-height:18.90px;font-weight:normal;color:#333;font-family:'Liberation Sans', sans-serif;transform:scaleX(0.8794);-webkit-text-stroke:0.15px #333;">Expt1</div>
<div class="t" style="left:1849.50px;top:993.75px;font-size:18.90px;line-height:18.90px;font-weight:normal;color:#333;font-family:'Liberation Sans', sans-serif;transform:scaleX(0.8794);-webkit-text-stroke:0.15px #333;">Expt1</div>
<div class="t" style="left:1932.10px;top:993.75px;font-size:18.90px;line-height:18.90px;font-weight:normal;color:#333;font-family:'Liberation Sans', sans-serif;transform:scaleX(0.8794);-webkit-text-stroke:0.15px #333;">Expt1</div>
<div class="t" style="left:2014.70px;top:993.75px;font-size:18.90px;line-height:18.90px;font-weight:normal;color:#333;font-family:'Liberation Sans', sans-serif;transform:scaleX(0.8794);-webkit-text-stroke:0.15px #333;">Expt1</div>
<div class="t" style="left:2097.30px;top:993.75px;font-size:18.90px;line-height:18.90px;font-weight:normal;color:#333;font-family:'Liberation Sans', sans-serif;transform:scaleX(0.8794);-webkit-text-stroke:0.15px #333;">Expt1</div>
<div class="t" style="left:2179.90px;top:993.75px;font-size:18.90px;line-height:18.90px;font-weight:normal;color:#333;font-family:'Liberation Sans', sans-serif;transform:scaleX(0.8794);-webkit-text-stroke:0.15px #333;">Expt1</div>
<div class="t" style="left:2262.50px;top:993.75px;font-size:18.90px;line-height:18.90px;font-weight:normal;color:#333;font-family:'Liberation Sans', sans-serif;transform:scaleX(0.8794);-webkit-text-stroke:0.15px #333;">Expt1</div>
<div class="t" style="left:2345.10px;top:993.75px;font-size:18.90px;line-height:18.90px;font-weight:normal;color:#333;font-family:'Liberation Sans', sans-serif;transform:scaleX(0.8794);-webkit-text-stroke:0.15px #333;">Expt1</div>
<div class="r" style="left:815.00px;top:280.00px;width:1600.00px;height:1.00px;background:#222;"></div>
<div class="r" style="left:815.00px;top:1036.00px;width:1600.00px;height:1.20px;background:#333;"></div>
<div class="t" style="left:815.00px;top:1053.97px;font-size:19.77px;line-height:19.77px;font-weight:normal;color:#333;font-family:'Liberation Sans', sans-serif;transform:scaleX(0.8983);">Showing 1 to 16 of 16 entries</div>
<div class="t" style="left:2176.60px;top:1057.52px;font-size:20.06px;line-height:20.06px;font-weight:normal;color:#666;font-family:'Liberation Sans', sans-serif;transform:scaleX(0.9484);">Previous</div>
<div class="r" style="left:2275.00px;top:1041.30px;width:53.80px;height:51.30px;box-sizing:border-box;border:1px solid #b0b0b0;border-radius:3px;background:linear-gradient(to bottom,#ffffff 0%,#dcdcdc 100%);"></div>
<div class="t" style="left:2297.00px;top:1057.52px;font-size:20.06px;line-height:20.06px;font-weight:normal;color:#333;font-family:'Liberation Sans', sans-serif;">1</div>
<div class="t" style="left:2353.20px;top:1057.52px;font-size:20.06px;line-height:20.06px;font-weight:normal;color:#666;font-family:'Liberation Sans', sans-serif;transform:scaleX(0.9704);">Next</div>
<div class="r" style="left:2415.00px;top:0.00px;width:4.00px;height:1106.00px;background:linear-gradient(to bottom,#000 0,#000 903px,#6a1219 903px,#3a0b0f 985px,#120406 1066px,#b6a2c9 1073px,#b6a2c9 1106px);"></div>
</body></html>
